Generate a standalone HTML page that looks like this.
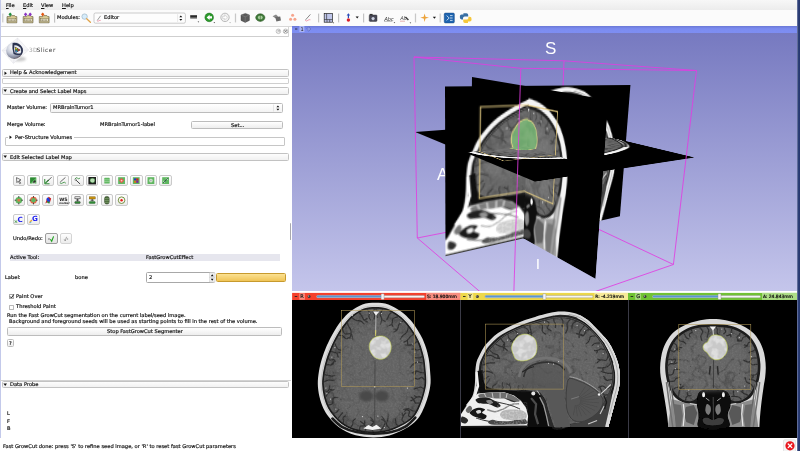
<!DOCTYPE html>
<html><head><meta charset="utf-8"><title>3D Slicer</title><style>
html,body{margin:0;padding:0;background:#fff;}
#root{position:relative;width:800px;height:451px;overflow:hidden;background:#fff;font-family:"DejaVu Sans","Liberation Sans",sans-serif;font-size:5.15px;color:#222;}
.a{position:absolute;}
.t{position:absolute;will-change:transform;white-space:nowrap;line-height:7px;height:7px;color:#141414;-webkit-text-stroke:0.18px #141414;}
.cb{position:absolute;left:2px;width:287px;height:8px;border:0.6px solid #c2c2c2;border-radius:1.5px;background:linear-gradient(#fdfdfd,#f1f1f1);box-sizing:border-box;}
.btn{position:absolute;border:0.6px solid #bcbcbc;border-radius:1.5px;background:linear-gradient(#ffffff,#ededed);box-sizing:border-box;}
.tb{position:absolute;width:12.6px;height:11.8px;border:0.6px solid #cacaca;border-radius:2px;background:linear-gradient(#fefefe,#ececec);box-sizing:border-box;}
svg{position:absolute;overflow:hidden;}
</style></head><body><div id="root">
<div class="a" style="left:0px;top:0px;width:800px;height:10px;background:linear-gradient(#f7f7f7,#ececec);"></div>
<span class="t" style="left:6px;top:1.70px;"><u>F</u>ile</span>
<span class="t" style="left:22.5px;top:1.70px;"><u>E</u>dit</span>
<span class="t" style="left:41px;top:1.70px;"><u>V</u>iew</span>
<span class="t" style="left:61.5px;top:1.70px;"><u>H</u>elp</span>
<div class="a" style="left:0px;top:10px;width:800px;height:16px;background:#fbfbfb;"></div>
<div class="a" style="left:0px;top:26px;width:292px;height:0.7px;background:#d8d8d8;"></div>
<svg style="left:0;top:10px;will-change:transform" width="480" height="16" viewBox="0 10 480 16"><path d="M2.8 13.6 V22.4" stroke="#9a9a9a" stroke-width="0.6"/><path d="M3.7 13.6 V22.4" stroke="#e4e4e4" stroke-width="0.5"/><path d="M7 16.6 h3.4 l1 -1 h3.2 l0.8 1 h1.4 v6.2 h-9.8z" fill="#d9cb93" stroke="#4f472a" stroke-width="0.55"/><rect x="7.9" y="18.6" width="8" height="3" fill="#f1ead0" stroke="#4f472a" stroke-width="0.35"/><path d="M8.8 19.4 v1.5 M10.2 19.4 v1.5 M11.6 19.4 v1.5 M13 19.4 v1.5 M14.4 19.4 v1.5" stroke="#4f472a" stroke-width="0.55"/><path d="M10.2 12.6 l1.7 1.7 l-1.7 2.3 l-1.7 -2.3z" fill="#1d8b3c"/><path d="M23.2 16.6 h3.4 l1 -1 h3.2 l0.8 1 h1.4 v6.2 h-9.8z" fill="#d9cb93" stroke="#4f472a" stroke-width="0.55"/><rect x="24.099999999999998" y="18.6" width="8" height="3" fill="#f1ead0" stroke="#4f472a" stroke-width="0.35"/><path d="M25.0 19.4 v1.5 M26.4 19.4 v1.5 M27.799999999999997 19.4 v1.5 M29.2 19.4 v1.5 M30.6 19.4 v1.5" stroke="#4f472a" stroke-width="0.55"/><path d="M25.599999999999998 12.6 l1.7 1.7 l-1.7 2.3 l-1.7 -2.3z" fill="#8b36c2"/><path d="M30.2 12.6 l1.7 1.7 l-1.7 2.3 l-1.7 -2.3z" fill="#8b36c2"/><path d="M39.3 16.6 h3.4 l1 -1 h3.2 l0.8 1 h1.4 v6.2 h-9.8z" fill="#d9cb93" stroke="#4f472a" stroke-width="0.55"/><rect x="40.199999999999996" y="18.6" width="8" height="3" fill="#f1ead0" stroke="#4f472a" stroke-width="0.35"/><path d="M41.099999999999994 19.4 v1.5 M42.5 19.4 v1.5 M43.9 19.4 v1.5 M45.3 19.4 v1.5 M46.699999999999996 19.4 v1.5" stroke="#4f472a" stroke-width="0.55"/><path d="M42.699999999999996 12.6 l1.7 1.7 l-1.7 2.3 l-1.7 -2.3z" fill="#e2560f"/><path d="M54.6 13.4 V22.6" stroke="#8e8e8e" stroke-width="0.6"/><path d="M55.4 13.4 V22.6" stroke="#e8e8e8" stroke-width="0.5"/><circle cx="84.6" cy="16.6" r="2.7" fill="#d6ecfa" stroke="#9bb4c6" stroke-width="0.7"/><path d="M86.7 18.8 L90.4 22.2" stroke="#e0a248" stroke-width="1.3" stroke-linecap="round"/><rect x="94" y="13" width="91.4" height="10.2" rx="1.5" fill="#fdfdfd" stroke="#ababab" stroke-width="0.6"/><path d="M177.6 14.2 V22" stroke="#d4d4d4" stroke-width="0.5"/><path d="M179.3 17.3 L180.8 15.4 L182.3 17.3Z M179.3 18.9 L180.8 20.8 L182.3 18.9Z" fill="#111"/><path d="M97.3 20.4 L100.6 15.8" stroke="#555" stroke-width="0.6"/><path d="M97 20.8 q1 0.9 2 0 t1.8 -0.4" stroke="#e05070" stroke-width="0.5" fill="none"/><rect x="190.2" y="15.2" width="6.8" height="2.6" fill="#2b2b2b"/><rect x="190.2" y="17.8" width="6.8" height="1" fill="#8a8a8a"/><path d="M197.6 21.6 h1.6 l-0.8 1z" fill="#222"/><circle cx="209.2" cy="17.4" r="4.3" fill="#2c9a2c" stroke="#1a6a1a" stroke-width="0.5"/><path d="M206.6 17.4 L209.6 14.7 V16.3 H212 V18.5 H209.6 V20.1Z" fill="#fff"/><path d="M213.5 22.2 h1.6 l-0.8 1z" fill="#222"/><circle cx="225" cy="17.4" r="4.2" fill="#f0f0f0" stroke="#a4a4a4" stroke-width="0.7"/><path d="M227.4 17.4 L224.6 14.9 V16.4 H222.6 V18.4 H224.6 V19.9Z" fill="#fff" stroke="#b0b0b0" stroke-width="0.4"/><path d="M229.3 22.2 h1.6 l-0.8 1z" fill="#999"/><path d="M235.4 13.6 V22.4" stroke="#8e8e8e" stroke-width="0.6"/><path d="M236.2 13.6 V22.4" stroke="#e8e8e8" stroke-width="0.5"/><path d="M241 15 L245.4 13.4 L249.4 15 L249.4 20.4 L245.2 22.4 L241 20.4Z" fill="#5c5c5c" stroke="#333" stroke-width="0.4"/><path d="M241 15 L245.2 16.8 L249.4 15 M245.2 16.8 V22.4" stroke="#8c8c8c" stroke-width="0.45" fill="none"/><ellipse cx="260.3" cy="17.6" rx="4.6" ry="3.8" fill="#3f7a3a" stroke="#28501f" stroke-width="0.5"/><ellipse cx="260.3" cy="17.6" rx="2.4" ry="2" fill="#a9cf9e"/><path d="M260.3 14 V21.2" stroke="#28501f" stroke-width="0.5"/><path d="M272.6 16.2 L276 14.4 L278.2 16.6 L275.4 18.2Z" fill="#8a8a8a"/><path d="M275.2 17 L280.2 16.4 L281 20.6 L276.4 21.6Z" fill="#6a6a6a"/><circle cx="292.6" cy="15.2" r="1.5" fill="#f6a48c"/><circle cx="290.6" cy="19.2" r="1.5" fill="#f6a48c"/><circle cx="294.9" cy="19.2" r="1.5" fill="#f6a48c"/><path d="M305.6 19.8 L310.4 14.4" stroke="#555" stroke-width="0.7"/><path d="M305.2 20.4 q1.3 1.2 2.6 0 t2.6 -0.6" stroke="#e8506e" stroke-width="0.55" fill="none"/><path d="M318.6 13.6 V22.4" stroke="#8e8e8e" stroke-width="0.6"/><path d="M319.4 13.6 V22.4" stroke="#e8e8e8" stroke-width="0.5"/><rect x="324.2" y="13.6" width="8.2" height="8.6" fill="#bfc6ea" stroke="#222" stroke-width="0.7"/><path d="M324.2 19.6 H332.4 M327 19.6 V22.2 M329.7 19.6 V22.2 M326.6 13.6 V19.6" stroke="#222" stroke-width="0.6"/><path d="M332.6 22.6 h1.6 l-0.8 1z" fill="#222"/><path d="M338.6 13.6 V22.4" stroke="#8e8e8e" stroke-width="0.6"/><path d="M339.4 13.6 V22.4" stroke="#e8e8e8" stroke-width="0.5"/><path d="M348.4 13.2 L350.2 15.6 H349 V18 H347.8 V15.6 H346.6Z" fill="#2a4ab8"/><circle cx="348.4" cy="20" r="1.7" fill="#d81e2a"/><path d="M355.6 16.4 h3.2 l-1.6 2z" fill="#111"/><path d="M363.6 13.6 V22.4" stroke="#8e8e8e" stroke-width="0.6"/><path d="M364.4 13.6 V22.4" stroke="#e8e8e8" stroke-width="0.5"/><rect x="369.2" y="15" width="7.8" height="6.4" rx="0.8" fill="#4a4a5a" stroke="#222" stroke-width="0.4"/><circle cx="373.1" cy="18.6" r="1.9" fill="#cfd4e6" stroke="#222" stroke-width="0.4"/><rect x="369.6" y="13.9" width="3" height="1.3" fill="#333"/><text x="384.2" y="20.6" font-size="5.4" fill="#444" font-family="DejaVu Sans,Liberation Sans,sans-serif" font-style="italic" letter-spacing="-0.3">Abc</text><path d="M384 21.4 h8.4" stroke="#666" stroke-width="0.4"/><path d="M393.6 22.2 h1.6 l-0.8 1z" fill="#222"/><text x="400.2" y="20.4" font-size="5.2" fill="#555" font-family="DejaVu Sans,Liberation Sans,sans-serif" font-style="italic" letter-spacing="-0.3">Ab</text><path d="M400 21.2 h5" stroke="#c04040" stroke-width="0.4"/><path d="M405.4 17 l3 3" stroke="#444" stroke-width="1.5"/><path d="M409.6 22.4 h1.6 l-0.8 1z" fill="#222"/><path d="M415.4 13.6 V22.4" stroke="#8e8e8e" stroke-width="0.6"/><path d="M416.2 13.6 V22.4" stroke="#e8e8e8" stroke-width="0.5"/><path d="M424.6 13.4 L425.5 16.8 L429 17.7 L425.5 18.6 L424.6 22 L423.7 18.6 L420.2 17.7 L423.7 16.8Z" fill="#eda33a"/><path d="M432.8 16.8 h3.2 l-1.6 2z" fill="#111"/><path d="M440.2 13.6 V22.4" stroke="#8e8e8e" stroke-width="0.6"/><path d="M441 13.6 V22.4" stroke="#e8e8e8" stroke-width="0.5"/><rect x="444.2" y="13" width="10.2" height="10" rx="1.2" fill="#1f64ae" stroke="#123e78" stroke-width="0.4"/><path d="M446.6 15.6 l2.6 2.4 l-2.6 2.4 M450 15.6 h2.6 M450 18 h2.6 M450 20.4 h2.6" stroke="#e6f0fa" stroke-width="0.8" fill="none"/><path d="M463.4 13.2 h3 q1.8 0 1.8 1.8 v1.6 h-3.4 q-1.8 0 -1.8 1.6 v1.2 h-1.4 q-1.8 0 -1.8 -2.4 q0 -2.4 1.8 -2.4 h1.8z" fill="#386fa4"/><path d="M468 23 h-3 q-1.8 0 -1.8 -1.8 v-1.6 h3.4 q1.8 0 1.8 -1.6 v-1.2 h1.4 q1.8 0 1.8 2.4 q0 2.4 -1.8 2.4 h-1.8z" fill="#f5c73c"/></svg>
<span class="t" style="left:56.6px;top:14.30px;">Modules:</span>
<span class="t" style="left:104.4px;top:14.30px;">Editor</span>
<div class="a" style="left:0px;top:36.0px;width:289px;height:0.8px;background:#cfcfcf;"></div>
<div class="a" style="left:288.4px;top:26.5px;width:0.7px;height:10px;background:#d6d6d6;"></div>
<div class="a" style="left:0px;top:0px;width:1.2px;height:438px;background:#c3c9ea;"></div>
<svg style="left:274px;top:27px" width="16" height="9" viewBox="0 0 16 9"><circle cx="4.4" cy="4.3" r="2.3" fill="#f2f2f2" stroke="#9a9a9a" stroke-width="0.5"/><path d="M3.3 5.4 L5.5 3.2 M3.4 3.3 h2 v2" stroke="#8a8a8a" stroke-width="0.45" fill="none"/><circle cx="11.6" cy="4.3" r="2.3" fill="#f2f2f2" stroke="#8a8a8a" stroke-width="0.5"/><path d="M10.3 3 L12.9 5.6 M12.9 3 L10.3 5.6" stroke="#666" stroke-width="0.7"/></svg>
<svg style="left:0px;top:36.6px;will-change:transform" width="64" height="27" viewBox="0 36.6 64 27">
<defs><radialGradient id="lg1" cx="0.38" cy="0.3" r="0.75"><stop offset="0" stop-color="#ffffff"/><stop offset="0.5" stop-color="#c5cad8"/><stop offset="0.85" stop-color="#7d8296"/><stop offset="1" stop-color="#5c4e52"/></radialGradient>
<filter id="lgb" x="-20%" y="-20%" width="140%" height="140%"><feGaussianBlur stdDeviation="0.4"/></filter>
<filter id="lgs" x="-30%" y="-30%" width="160%" height="160%"><feGaussianBlur stdDeviation="1.2"/></filter></defs>
<ellipse cx="19" cy="58.6" rx="7" ry="2.6" fill="#999" opacity="0.5" filter="url(#lgs)"/>
<g filter="url(#lgb)">
<path d="M2 50 L17.6 37.6 L28.6 49.6 L13.4 63 Z" fill="#f4f4f7" stroke="#d8d8de" stroke-width="0.4" opacity="0.9"/>
<path d="M2 50 L28.6 49.6 M17.6 37.6 L13.4 63" stroke="#dcdce2" stroke-width="0.4"/>
<circle cx="14.4" cy="50.2" r="8.3" fill="url(#lg1)"/>
<path d="M12.6 42.6 Q19 41.6 22.6 47.6 Q23.6 51.6 21.6 54 Q17 55.6 13.6 53.6 Q11.6 48 12.6 42.6Z" fill="#2a3350"/>
<path d="M14.2 45 Q18.6 44.6 21 48.6 Q21.6 51.6 20.4 53 Q17 53.6 14.8 52.4 Q13.6 48.6 14.2 45Z" fill="#e9edf2"/>
<path d="M14.6 46 L20.6 49.6 L15.6 52.6 Z" fill="#20243a"/>
<path d="M15.2 46.8 L17.4 48 L15.6 49.6 Z" fill="#f0cf2a"/>
<path d="M17.4 48 L19.8 49.6 L17.6 50.8 Z" fill="#e0402a"/>
<path d="M15.6 49.6 L17.6 50.8 L15.8 52 Z" fill="#3a8ee0"/>
<path d="M15.6 49.6 L17.4 48 L17.6 50.8 Z" fill="#3fae48"/>
</g>
<text x="29" y="52" font-size="5.9" fill="#a8a8a8" font-family="DejaVu Sans,Liberation Sans,sans-serif" letter-spacing="0.35">3D</text>
<text x="36.6" y="52" font-size="5.9" fill="#383838" font-family="DejaVu Sans,Liberation Sans,sans-serif" letter-spacing="0.5">Slicer</text>
</svg>
<div class="cb" style="top:68.6px;height:8.4px"></div>
<svg style="left:3.8px;top:70.50px" width="4" height="5" viewBox="0 0 4 5"><path d="M0.5 0.4 V4 L2.9 2.2 Z" fill="#111"/></svg>
<span class="t" style="left:10.3px;top:69.30px;">Help &amp; Acknowledgement</span>
<div class="a" style="left:2px;top:78.2px;width:287px;height:5.4px;border:0.6px solid #cfcfcf;box-sizing:border-box;border-radius:1px;"></div>
<div class="cb" style="top:86.8px;height:8.4px"></div>
<svg style="left:3.4px;top:89.10px" width="5" height="4" viewBox="0 0 5 4"><path d="M0.4 0.6 H4 L2.2 3 Z" fill="#111"/></svg>
<span class="t" style="left:10.3px;top:87.50px;">Create and Select Label Maps</span>
<span class="t" style="left:7.3px;top:104.40px;">Master Volume:</span>
<div class="btn" style="left:50.3px;top:103px;width:232.3px;height:10px;background:linear-gradient(#fff,#f3f3f3)"></div>
<span class="t" style="left:53px;top:104.40px;">MRBrainTumor1</span>
<svg style="left:273px;top:103px" width="10" height="10" viewBox="0 0 10 10"><path d="M0.5 1.5 V8.5" stroke="#d0d0d0" stroke-width="0.5"/><path d="M3.4 4.3 L4.9 2.5 L6.4 4.3 Z M3.4 5.7 L4.9 7.5 L6.4 5.7 Z" fill="#111"/></svg>
<span class="t" style="left:7.3px;top:121.40px;">Merge Volume:</span>
<span class="t" style="left:99.8px;top:121.40px;">MRBrainTumor1-label</span>
<div class="btn" style="left:191.2px;top:120.6px;width:91.4px;height:8.9px"></div>
<span class="t" style="left:230.6px;top:121.50px;">Set...</span>
<div class="a" style="left:5.4px;top:137.3px;width:279.4px;height:9px;border:0.6px solid #c6c6c6;box-sizing:border-box;border-radius:1px;"></div>
<div class="a" style="left:8px;top:135px;width:66px;height:5px;background:#fff;"></div>
<svg style="left:9.4px;top:135.2px" width="4" height="5" viewBox="0 0 4 5"><path d="M0.5 0.4 V4 L2.9 2.2 Z" fill="#111"/></svg>
<span class="t" style="left:15px;top:133.80px;">Per-Structure Volumes</span>
<div class="cb" style="top:152.9px;height:8.6px"></div>
<svg style="left:3.4px;top:155.30px" width="5" height="4" viewBox="0 0 5 4"><path d="M0.4 0.6 H4 L2.2 3 Z" fill="#111"/></svg>
<span class="t" style="left:10.3px;top:153.70px;">Edit Selected Label Map</span>
<div class="tb" style="left:12.50px;top:174.7px"></div><div class="tb" style="left:27.18px;top:174.7px"></div><div class="tb" style="left:41.86px;top:174.7px"></div><div class="tb" style="left:56.54px;top:174.7px"></div><div class="tb" style="left:71.22px;top:174.7px"></div><div class="tb" style="left:85.90px;top:174.7px"></div><div class="tb" style="left:100.58px;top:174.7px"></div><div class="tb" style="left:115.26px;top:174.7px"></div><div class="tb" style="left:129.94px;top:174.7px"></div><div class="tb" style="left:144.62px;top:174.7px"></div><div class="tb" style="left:159.30px;top:174.7px"></div><div class="tb" style="left:12.50px;top:194.3px"></div><div class="tb" style="left:27.18px;top:194.3px"></div><div class="tb" style="left:41.86px;top:194.3px"></div><div class="tb" style="left:56.54px;top:194.3px"></div><div class="tb" style="left:71.22px;top:194.3px"></div><div class="tb" style="left:85.90px;top:194.3px"></div><div class="tb" style="left:100.58px;top:194.3px"></div><div class="tb" style="left:115.26px;top:194.3px"></div><div class="tb" style="left:12.50px;top:213.5px"></div><div class="tb" style="left:27.18px;top:213.5px"></div>
<svg style="left:0;top:170px;will-change:transform" width="180" height="60" viewBox="0 170 180 60"><path d="M16.5 177.6 L21.0 180.0 L19.1 180.7 L20.7 183.2 L19.7 183.7 L18.2 181.2 L16.900000000000002 182.6Z" fill="#fff" stroke="#2a2a2a" stroke-width="0.65"/><rect x="30.179999999999996" y="177.6" width="6.2" height="6" fill="#5fb760"/><path d="M30.179999999999996 177.6 h6.2 l-6.2 6z" fill="#2f8a35"/><path d="M32.68 182.2 l2.2 -2.2 l1.2 1.2 l-2.2 2.2z" fill="#333"/><path d="M32.08 183.2 h3" stroke="#fff" stroke-width="0.6"/><path d="M44.76 179.0 V183.79999999999998 H49.559999999999995" stroke="#2f8a35" stroke-width="1" fill="none"/><path d="M45.16 183.4 L48.66 180.0" stroke="#2f8a35" stroke-width="1.1"/><path d="M47.559999999999995 181.2 L51.559999999999995 177.2" stroke="#333" stroke-width="0.8"/><path d="M60.239999999999995 182.0 L65.44 177.4" stroke="#444" stroke-width="0.8"/><path d="M59.839999999999996 182.79999999999998 q1.6 1.4 3 0 t3 0.4" stroke="#2f8a35" stroke-width="0.8" fill="none"/><path d="M74.92 179.2 q1.2 -2.6 2.6 -1 t2.6 -0.4" stroke="#2f8a35" stroke-width="0.8" fill="none"/><path d="M75.92 180.0 L80.11999999999999 184.0" stroke="#333" stroke-width="0.9"/><circle cx="75.72" cy="179.79999999999998" r="0.8" fill="#fff" stroke="#333" stroke-width="0.4"/><rect x="88.4" y="177.0" width="7.6" height="7.4" fill="#1e1e1e"/><path d="M90.0 180.2 q0 -2.2 2.4 -2 q2.8 0 2.4 2.4 q0 2.6 -2.6 2.2 q-2.4 -0.2 -2.2 -2.6z" fill="#b9dfb4" stroke="#2f8a35" stroke-width="0.4"/><rect x="104.28" y="177.79999999999998" width="5.4" height="5.8" rx="0.6" fill="#5fb760"/><path d="M104.28 179.79999999999998 h5.4 M104.28 181.6 h5.4" stroke="#dff0dc" stroke-width="0.4"/><rect x="118.15999999999998" y="177.2" width="6.8" height="6.8" fill="#5fb760"/><path d="M121.55999999999999 178.0 L124.15999999999998 180.6 L121.55999999999999 183.2 L118.96 180.6Z" fill="#e8564a"/><circle cx="121.55999999999999" cy="180.6" r="0.9" fill="#f6cfc8"/><rect x="132.84" y="177.2" width="6.8" height="6.8" fill="#5fb760"/><rect x="134.04000000000002" y="178.4" width="2.2" height="2.2" fill="#2438c8"/><rect x="136.24" y="178.4" width="2.2" height="2.2" fill="#d02020"/><rect x="134.04000000000002" y="180.6" width="2.2" height="2.2" fill="#d07a10"/><rect x="136.24" y="180.6" width="2.2" height="2.2" fill="#7a20a0"/><rect x="147.52" y="177.2" width="6.8" height="6.8" fill="#5fb760"/><circle cx="150.92000000000002" cy="180.6" r="1.9" fill="#d6ead2" stroke="#8fbf8a" stroke-width="0.5"/><circle cx="150.92000000000002" cy="180.6" r="0.6" fill="#9a7ab0"/><rect x="162.20000000000002" y="177.2" width="6.8" height="6.8" fill="#5fb760"/><path d="M163.40000000000003 182.79999999999998 L167.8 178.4" stroke="#234" stroke-width="0.9"/><path d="M163.20000000000002 181.0 l1.6 1.6 M166.40000000000003 178.6 l1.4 1.4" stroke="#fff" stroke-width="0.7"/><circle cx="18.8" cy="200.20000000000002" r="3.3" fill="#5fb760"/><rect x="17.5" y="198.9" width="2.6" height="2.6" fill="#d9784a"/><path d="M18.8 196.00000000000003 v1.6 M18.8 202.8 v1.6 M14.600000000000001 200.20000000000002 h1.6 M21.400000000000002 200.20000000000002 h1.6" stroke="#222" stroke-width="0.8"/><circle cx="33.48" cy="200.20000000000002" r="3.4" fill="#e8684a"/><circle cx="33.48" cy="200.20000000000002" r="2.2" fill="#5fb760"/><path d="M33.48 196.00000000000003 v1.6 M33.48 202.8 v1.6 M29.279999999999998 200.20000000000002 h1.6 M36.08 200.20000000000002 h1.6" stroke="#222" stroke-width="0.8"/><path d="M45.36 203.60000000000002 L46.76 199.20000000000002 L48.76 196.8 L49.559999999999995 200.8Z" fill="#c82020"/><path d="M48.76 196.8 L51.16 198.60000000000002 L49.76 203.00000000000003 L48.559999999999995 200.20000000000002Z" fill="#c82020"/><ellipse cx="48.36" cy="200.00000000000003" rx="1.5" ry="2.4" fill="#1c3ce0" transform="rotate(-25 48.16 200.20000000000002)"/><path d="M47.16 201.60000000000002 l2.4 1.6" stroke="#2f8a35" stroke-width="1.4"/><text x="59.13999999999999" y="200.50000000000003" font-size="4.6" font-weight="bold" fill="#222" font-family="DejaVu Sans,Liberation Sans,sans-serif">WS</text><text x="59.239999999999995" y="203.60000000000002" font-size="2.6" font-weight="bold" fill="#222" font-family="DejaVu Sans,Liberation Sans,sans-serif">marker</text><rect x="74.92" y="196.8" width="5.2" height="2" fill="#e8e8e8" stroke="#222" stroke-width="0.5"/><path d="M77.52 198.8 V201.4 M75.92 200.00000000000003 h3.2" stroke="#222" stroke-width="0.7"/><rect x="74.72" y="201.4" width="5.6" height="2.2" rx="1" fill="#2f8a35" stroke="#222" stroke-width="0.4"/><rect x="89.2" y="196.8" width="6" height="2.2" fill="#c89210" stroke="#6a4a00" stroke-width="0.4"/><path d="M92.2 199.00000000000003 V201.4 M90.60000000000001 200.20000000000002 h3.2" stroke="#222" stroke-width="0.7"/><rect x="89.2" y="201.4" width="6" height="2.2" rx="0.8" fill="#2f8a35" stroke="#1e5a22" stroke-width="0.4"/><rect x="104.58" y="196.4" width="4.6" height="7.6" rx="2" fill="#4a6a3a" stroke="#263a1c" stroke-width="0.5"/><path d="M104.67999999999999 198.60000000000002 h4.4 M104.67999999999999 200.60000000000002 h4.4 M104.67999999999999 202.4 h4.4" stroke="#9ab88a" stroke-width="0.5"/><circle cx="121.55999999999999" cy="200.20000000000002" r="3.3" fill="#f6f6ee" stroke="#5a7a1e" stroke-width="0.8"/><circle cx="121.55999999999999" cy="200.20000000000002" r="1.2" fill="#e81818"/><text x="17.5" y="222.0" font-size="7.2" font-weight="bold" fill="#1c1cf0" font-family="DejaVu Sans,Liberation Sans,sans-serif">C</text><path d="M14.8 222.8 l2.2 -2.4 M14.8 220.4 l2.2 2.4" stroke="#2f8a35" stroke-width="0.8"/><text x="31.979999999999997" y="221.4" font-size="7.2" font-weight="bold" fill="#1c1cf0" font-family="DejaVu Sans,Liberation Sans,sans-serif">G</text><path d="M29.479999999999997 222.6 l2.4 -2.6" stroke="#e8a83a" stroke-width="1.3"/><path d="M29.879999999999995 223.0 l1.6 -1" stroke="#58b8e8" stroke-width="1"/></svg>
<span class="t" style="left:12.6px;top:235.20px;">Undo/Redo:</span>
<div class="tb" style="left:45.2px;top:232.6px;border-color:#9c9c9c;background:linear-gradient(#f4f4f4,#e4e4e4)"></div>
<div class="tb" style="left:59.9px;top:232.6px;border-color:#d4d4d4"></div>
<svg style="left:45.2px;top:232.6px" width="28" height="12" viewBox="0 0 28 12"><path d="M3.4 6 h1.4 M3.4 6 l0.8 -0.8 M3.4 6 l0.8 0.8" stroke="#333" stroke-width="0.45" fill="none"/><path d="M5.4 6.3 L6.7 8.3 L8.6 3.4" stroke="#1ea01e" stroke-width="1.1" fill="none"/><path d="M19.2 6.3 L20.2 8 L21.6 3.8" stroke="#555" stroke-width="0.5" fill="none"/><path d="M22.2 6 l0.9 0 M23.1 6 l-0.6 -0.6 M23.1 6 l-0.6 0.6" stroke="#555" stroke-width="0.4" fill="none"/></svg>
<div class="a" style="left:9.6px;top:254.4px;width:270.6px;height:6.3px;background:#e6e6ee;"></div>
<span class="t" style="left:10.2px;top:254.00px;">Active Tool:</span>
<span class="t" style="left:145.8px;top:254.00px;">FastGrowCutEffect</span>
<span class="t" style="left:4.8px;top:274.20px;">Label:</span>
<span class="t" style="left:75px;top:274.20px;">bone</span>
<div class="btn" style="left:145.6px;top:272.3px;width:69.3px;height:10.8px;background:#fff;border-color:#a8a8a8"></div>
<span class="t" style="left:149px;top:274.20px;">2</span>
<svg style="left:208.6px;top:272.3px" width="7" height="11" viewBox="0 0 7 11"><rect x="0.3" y="0.6" width="5.8" height="9.6" rx="1" fill="#efefef" stroke="#b8b8b8" stroke-width="0.4"/><path d="M0.3 5.4 H6.1" stroke="#b8b8b8" stroke-width="0.4"/><path d="M1.8 4.2 L3.2 2.2 L4.6 4.2 Z M1.8 6.7 L3.2 8.7 L4.6 6.7 Z" fill="#111"/></svg>
<div class="a" style="left:216px;top:272.6px;width:69.6px;height:9.6px;border:0.6px solid #c79a2e;border-radius:1.5px;background:linear-gradient(#fbe192,#f0c456);box-sizing:border-box"></div>
<div class="a" style="left:8.6px;top:294px;width:5px;height:5px;border:0.5px solid #a9a9a9;background:#fff;box-sizing:border-box;border-radius:0.6px"></div>
<svg style="left:8.6px;top:293px" width="6" height="7" viewBox="0 0 6 7"><path d="M1.2 3.5 L2.4 5 L4.8 1.4" stroke="#111" stroke-width="0.9" fill="none"/></svg>
<span class="t" style="left:16px;top:293.00px;">Paint Over</span>
<div class="a" style="left:8.6px;top:304.6px;width:5px;height:5px;border:0.5px solid #b9b9b9;background:#fff;box-sizing:border-box;border-radius:0.6px"></div>
<span class="t" style="left:16px;top:303.40px;">Threshold Paint</span>
<span class="t" style="left:7.4px;top:312.10px;">Run the Fast GrowCut segmentation on the current label/seed image.</span>
<span class="t" style="left:9px;top:318.40px;">Background and foreground seeds will be used as starting points to fill in the rest of the volume.</span>
<div class="btn" style="left:7.4px;top:327.3px;width:275px;height:8.8px"></div>
<span class="t" style="left:106.6px;top:328.20px;">Stop FastGrowCut Segmenter</span>
<div class="btn" style="left:7.4px;top:338.6px;width:6.2px;height:8.8px"></div>
<span class="t" style="left:9.2px;top:339.50px;">?</span>
<div class="a" style="left:289.8px;top:223px;width:1.6px;height:17px;background:#a9a9ae;border-radius:0.8px;"></div>
<div class="a" style="left:0px;top:379.6px;width:291px;height:0.6px;background:#d2d2d2;"></div>
<div class="cb" style="top:380.9px;height:7.6px"></div>
<svg style="left:3.4px;top:382.80px" width="5" height="4" viewBox="0 0 5 4"><path d="M0.4 0.6 H4 L2.2 3 Z" fill="#111"/></svg>
<span class="t" style="left:10.3px;top:381.20px;">Data Probe</span>
<span class="t" style="left:7.4px;top:409.60px;">L</span>
<span class="t" style="left:7.4px;top:418.00px;">F</span>
<span class="t" style="left:7.4px;top:424.80px;">B</span>
<div class="a" style="left:292px;top:26px;width:505.3px;height:264.75px;overflow:hidden;background:linear-gradient(#7679c0 0px,#7679c0 6px,#c4c5eb 264px)"><div class="a" style="left:-292px;top:-26px;width:800px;height:451px"><svg style="left:0;top:0;will-change:transform" width="800" height="300" viewBox="0 0 800 300"><path d="M417.3 238 L558.4 210.3" stroke="#e23ce2" stroke-width="0.85" fill="none"/><path d="M673.4 264.5 L558.4 210.3" stroke="#e23ce2" stroke-width="0.85" fill="none"/><path d="M564 60.8 L558.4 210.3" stroke="#e23ce2" stroke-width="0.85" fill="none"/><text x="437" y="180.3" font-size="16.8" fill="#fff" font-family="Liberation Sans,Arial,sans-serif">A</text></svg>
<div class="a" style="left:0;top:0;width:180.67px;height:135.21px;transform-origin:0 0;transform:matrix3d(-0.33982511,-0.06558253,0,-0.0018739185,1.6999478,0.090652336,0,0.0013289083,0,0,1,0,415.2,131.9,0,1);--tf:#6e9b6a;--tw:0.8px;--so:0.55;--rc:#cbb574;--rw:0.85px;--to:0;--tg:1;--ts:#cfc27a;filter:brightness(1.13);"><svg style="left:0;top:0" width="180.67" height="135.21" viewBox="285.0 299.95 180.67 135.21"><use href="#axial"/></svg></div>
<div class="a" style="left:0;top:0;width:177.20px;height:116.30px;transform-origin:0 0;transform:matrix3d(-0.21848635,-0.032767523,0,-0.0016256436,0.22672301,1.2422467,0,0.00051316261,0,0,1,0,472,77,0,1);clip-path:polygon(0.00px 0.00px,89.40px 0.00px,89.40px 116.30px,0.00px 116.30px);--tf:#6e9b6a;--tw:0.8px;--so:0.55;--rc:#cbb574;--rw:0.85px;--to:0;--tg:1;--ts:#cfc27a;filter:brightness(1.13);"><svg style="left:0;top:0" width="177.20" height="116.30" viewBox="625.4 310.6 177.20 116.30"><use href="#cor"/></svg></div>
<div class="a" style="left:0;top:0;width:172.32px;height:116.57px;transform-origin:0 0;transform:matrix3d(2.2409868,0.14749939,0,0.0018445229,0.31793443,1.6306509,0,0.00070402954,0,0,1,0,445,86.6,0,1);--tf:#6e9b6a;--tw:0.8px;--so:0.55;--rc:#cbb574;--rw:0.85px;--to:0;--tg:1;--ts:#cfc27a;filter:brightness(1.13);"><svg style="left:0;top:0" width="172.32" height="116.57" viewBox="459.3 310.02 172.32 116.57"><use href="#sag"/></svg></div>
<div class="a" style="left:0;top:0;width:180.67px;height:135.21px;transform-origin:0 0;transform:matrix3d(-0.33982511,-0.06558253,0,-0.0018739185,1.6999478,0.090652336,0,0.0013289083,0,0,1,0,415.2,131.9,0,1);clip-path:polygon(94.90px 50.05px,180.67px 50.05px,180.67px 135.21px,94.90px 135.21px);--tf:#6e9b6a;--tw:0.8px;--so:0.55;--rc:#cbb574;--rw:0.85px;--to:0;--tg:1;--ts:#cfc27a;filter:brightness(1.13);"><svg style="left:0;top:0" width="180.67" height="135.21" viewBox="285.0 299.95 180.67 135.21"><use href="#axial"/></svg></div>
<div class="a" style="left:0;top:0;width:177.20px;height:116.30px;transform-origin:0 0;transform:matrix3d(-0.21848635,-0.032767523,0,-0.0016256436,0.22672301,1.2422467,0,0.00051316261,0,0,1,0,472,77,0,1);clip-path:polygon(89.40px 0.00px,177.20px 0.00px,177.20px 116.30px,89.40px 116.30px);--tf:#6e9b6a;--tw:0.8px;--so:0.55;--rc:#cbb574;--rw:0.85px;--to:0;--tg:1;--ts:#cfc27a;filter:brightness(1.13);"><svg style="left:0;top:0" width="177.20" height="116.30" viewBox="625.4 310.6 177.20 116.30"><use href="#cor"/></svg></div>
<div class="a" style="left:0;top:0;width:180.67px;height:135.21px;transform-origin:0 0;transform:matrix3d(-0.33982511,-0.06558253,0,-0.0018739185,1.6999478,0.090652336,0,0.0013289083,0,0,1,0,415.2,131.9,0,1);clip-path:polygon(94.90px 0.00px,180.67px 0.00px,180.67px 50.05px,94.90px 50.05px);--tf:#6e9b6a;--tw:0.8px;--so:0.55;--rc:#cbb574;--rw:0.85px;--to:0;--tg:1;--ts:#cfc27a;filter:brightness(1.13);"><svg style="left:0;top:0" width="180.67" height="135.21" viewBox="285.0 299.95 180.67 135.21"><use href="#axial"/></svg></div>
<svg style="left:0;top:0;will-change:transform" width="800" height="300" viewBox="0 0 800 300"><path d="M414 57 L520.8 68.3" stroke="#e23ce2" stroke-width="0.85" fill="none"/><path d="M520.8 68.3 L696.5 70.5" stroke="#e23ce2" stroke-width="0.85" fill="none"/><path d="M414 57 L564 60.8" stroke="#e23ce2" stroke-width="0.85" fill="none"/><path d="M564 60.8 L696.5 70.5" stroke="#e23ce2" stroke-width="0.85" fill="none"/><path d="M414 57 L417.3 238" stroke="#e23ce2" stroke-width="0.85" fill="none"/><path d="M696.5 70.5 L673.4 264.5" stroke="#e23ce2" stroke-width="0.85" fill="none"/><path d="M520.8 68.3 L513 320" stroke="#e23ce2" stroke-width="0.85" fill="none"/><path d="M417.3 238 L513 320" stroke="#e23ce2" stroke-width="0.85" fill="none"/><path d="M673.4 264.5 L513 320" stroke="#e23ce2" stroke-width="0.85" fill="none"/><text x="545" y="53.6" font-size="17" fill="#fff" font-family="Liberation Sans,Arial,sans-serif">S</text><text x="535.8" y="269.2" font-size="15.5" fill="#fff" font-family="Liberation Sans,Arial,sans-serif">I</text></svg>
</div><div class="a" style="left:0;top:0;width:505.3px;height:6.6px;background:linear-gradient(#6a78d6,#7c8cf0 40%,#7e8ef2)"></div><svg style="left:1px;top:0.4px;will-change:transform" width="24" height="6" viewBox="0 0 24 6"><path d="M2 3 h2.4" stroke="#223" stroke-width="0.9"/><rect x="6.4" y="0" width="5" height="6" fill="#aab4f4"/><text x="7.5" y="5" font-size="5" fill="#222" font-family="DejaVu Sans,Liberation Sans,sans-serif">1</text><path d="M15.8 0.8 L18 3 L15.8 5.2 L13.6 3Z" fill="#8d99e6" stroke="#4a569c" stroke-width="0.4"/></svg></div>
<svg width="0" height="0" style="position:absolute;left:0;top:0"><defs>
<filter id="b03" x="-10%" y="-10%" width="120%" height="120%"><feGaussianBlur stdDeviation="0.35"/></filter>
<filter id="b06" x="-10%" y="-10%" width="120%" height="120%"><feGaussianBlur stdDeviation="0.6"/></filter>
<filter id="b1" x="-10%" y="-10%" width="120%" height="120%"><feGaussianBlur stdDeviation="1"/></filter>
<filter id="b2" x="-20%" y="-20%" width="140%" height="140%"><feGaussianBlur stdDeviation="2"/></filter>
<filter id="sulci" x="0" y="0" width="100%" height="100%" color-interpolation-filters="sRGB">
 <feTurbulence type="turbulence" baseFrequency="0.075" numOctaves="2" seed="7" result="t"/>
 <feColorMatrix type="matrix" values="0 0 0 0 0  0 0 0 0 0  0 0 0 0 0  -5.5 0 0 0 1.0" result="a"/>
 <feGaussianBlur stdDeviation="0.55" result="m"/>
 <feComposite in="SourceGraphic" in2="m" operator="in"/>
</filter>
<filter id="grain" x="0" y="0" width="100%" height="100%" color-interpolation-filters="sRGB">
 <feTurbulence type="fractalNoise" baseFrequency="0.55" numOctaves="2" seed="3"/>
 <feColorMatrix type="matrix" values="0 0 0 0 1  0 0 0 0 1  0 0 0 0 1  1.6 0 0 0 -0.62"/>
 <feComposite in2="SourceGraphic" operator="in"/>
</filter>
<filter id="blot" x="0" y="0" width="100%" height="100%" color-interpolation-filters="sRGB">
 <feTurbulence type="fractalNoise" baseFrequency="0.16" numOctaves="2" seed="11"/>
 <feColorMatrix type="matrix" values="0 0 0 0 0  0 0 0 0 0  0 0 0 0 0  4 0 0 0 -1.7"/>
 <feGaussianBlur stdDeviation="0.5" result="m"/>
 <feComposite in="SourceGraphic" in2="m" operator="in"/>
</filter>
<g id="axial"><rect x="270" y="296" width="215" height="146" fill="#000"/><g filter="url(#b03)"><path d="M375 302.6C379.3 302.6 383.7 302.8 388 304.3C392.3 305.8 397.3 309 401 311.6C404.7 314.2 407.3 317 410 320C412.7 323 415 326.6 417 329.7C419 332.8 420.6 335.5 422 338.5C423.4 341.5 424.4 344.2 425.5 347.5C426.6 350.8 427.6 354.8 428.3 358.5C429 362.2 429.3 365.9 429.6 370C429.9 374.1 430.5 378.8 430.2 383C429.9 387.2 429 391.2 428 395C427 398.8 425.8 402.3 424.3 406C422.8 409.7 420.9 414 418.8 417C416.8 420 414.6 421.9 412 424C409.4 426.1 406.8 427.7 403 429.6C399.2 431.5 393.9 434.1 389 435.4C384.1 436.7 378.2 437.3 373.5 437.4C368.8 437.5 364.3 436.8 360.5 436.2C356.7 435.6 353.6 434.7 350.5 433.6C347.4 432.5 344.6 431.1 342 429.5C339.4 427.9 337 426.2 334.7 424C332.4 421.8 330 419.2 328 416.5C326 413.8 324.3 411.3 322.8 408C321.3 404.7 319.9 400.5 319 396.5C318.1 392.5 317.5 388.2 317.4 384C317.3 379.8 317.9 375.2 318.6 371C319.3 366.8 320.4 362.4 321.6 358.5C322.8 354.6 324.2 350.8 325.6 347.5C327 344.2 328.3 341.5 329.8 338.5C331.3 335.5 332.8 332.8 334.7 329.7C336.6 326.6 339 323 341.5 320C344 317 346.2 314.2 349.6 311.6C353 309 357.8 305.8 362 304.3C366.2 302.8 370.7 302.6 375 302.6Z" fill="#dedede"/><path d="M375 306.9C378.9 306.9 382.7 307 386.6 308.4C390.5 309.7 395.1 312.7 398.5 315.1C401.9 317.5 404.3 320 406.8 322.8C409.3 325.7 411.5 329.1 413.4 332C415.3 335 416.8 337.6 418.1 340.4C419.5 343.1 420.4 345.6 421.4 348.8C422.4 351.9 423.4 355.7 424.1 359.3C424.7 362.9 425 366.4 425.3 370.3C425.6 374.2 426.2 378.8 425.9 382.7C425.7 386.7 424.8 390.3 423.8 393.9C422.9 397.5 421.8 400.9 420.3 404.3C418.9 407.8 417.1 411.9 415.2 414.6C413.4 417.3 411.7 418.8 409.3 420.6C407 422.5 404.7 424 401.1 425.7C397.5 427.5 392.5 430 387.9 431.2C383.3 432.5 377.8 433 373.4 433.1C368.9 433.2 364.8 432.5 361.2 432C357.6 431.4 354.8 430.6 352 429.6C349.1 428.5 346.6 427.3 344.2 425.8C341.8 424.4 339.8 422.8 337.6 420.8C335.5 418.9 333.3 416.4 331.5 413.9C329.6 411.5 328.1 409.3 326.7 406.2C325.3 403.2 324 399.3 323.2 395.6C322.4 391.8 321.8 387.9 321.7 383.9C321.6 380 322.2 375.7 322.8 371.7C323.5 367.7 324.6 363.5 325.7 359.7C326.8 356 328.3 352.3 329.6 349.1C330.9 345.9 332.2 343.3 333.6 340.5C335.1 337.6 336.5 335 338.3 332C340.2 329 342.5 325.6 344.8 322.7C347.1 319.9 349.1 317.4 352.2 315C355.3 312.6 359.6 309.7 363.4 308.4C367.2 307 371.1 306.9 375 306.9Z" fill="#1d1d1d"/><path d="M375 308.6C378.7 308.6 382.3 308.7 386 310C389.8 311.3 394.3 314.1 397.5 316.5C400.8 318.8 403.1 321.2 405.5 324C407.9 326.7 410.1 330.1 412 333C413.8 335.8 415.3 338.4 416.6 341.1C417.9 343.8 418.8 346.2 419.8 349.3C420.7 352.4 421.8 356 422.4 359.6C423 363.1 423.3 366.6 423.6 370.5C423.9 374.3 424.5 378.8 424.2 382.6C424 386.5 423.1 390 422.2 393.5C421.3 397 420.2 400.3 418.8 403.7C417.4 407 415.6 411 413.8 413.6C412.1 416.2 410.5 417.5 408.3 419.3C406 421.1 403.8 422.5 400.3 424.2C396.9 425.9 392 428.4 387.5 429.6C383 430.8 377.7 431.3 373.3 431.4C369 431.5 364.9 430.9 361.5 430.3C358 429.7 355.3 428.9 352.5 428C349.8 427 347.4 425.8 345.1 424.4C342.8 423 340.8 421.5 338.8 419.6C336.7 417.7 334.6 415.3 332.8 412.9C331.1 410.6 329.6 408.5 328.3 405.5C326.9 402.6 325.7 398.8 324.9 395.2C324 391.6 323.5 387.8 323.4 383.9C323.3 380 323.9 375.9 324.5 372C325.2 368 326.2 363.9 327.4 360.2C328.5 356.5 329.9 352.9 331.2 349.8C332.5 346.6 333.7 344 335.1 341.2C336.6 338.4 337.9 335.8 339.8 332.9C341.6 330 343.9 326.6 346.1 323.8C348.4 321.1 350.3 318.7 353.2 316.4C356.2 314.1 360.4 311.2 364 310C367.6 308.7 371.3 308.6 375 308.6Z" fill="#585858"/><path d="M375 305.9C379 305.9 382.9 306 386.9 307.4C390.9 308.8 395.6 311.8 399.1 314.3C402.5 316.7 405 319.3 407.5 322.2C410.1 325.1 412.3 328.5 414.2 331.5C416.1 334.5 417.7 337.1 419 339.9C420.4 342.8 421.3 345.3 422.4 348.5C423.4 351.7 424.4 355.5 425.1 359.1C425.7 362.7 426 366.3 426.3 370.3C426.6 374.2 427.2 378.8 426.9 382.8C426.7 386.8 425.7 390.5 424.8 394.2C423.9 397.8 422.7 401.2 421.3 404.7C419.8 408.2 418 412.4 416.1 415.1C414.2 417.9 412.4 419.5 409.9 421.4C407.5 423.3 405.2 424.8 401.5 426.6C397.9 428.4 392.8 431 388.2 432.2C383.5 433.5 377.9 434 373.4 434.1C368.9 434.2 364.7 433.5 361 432.9C357.4 432.3 354.5 431.5 351.6 430.5C348.7 429.5 346.2 428.2 343.7 426.7C341.3 425.2 339.1 423.6 336.9 421.6C334.8 419.6 332.5 417 330.6 414.5C328.8 412 327.2 409.8 325.8 406.6C324.4 403.5 323.1 399.6 322.2 395.8C321.4 392 320.8 388 320.7 383.9C320.6 379.9 321.2 375.6 321.9 371.5C322.5 367.5 323.6 363.2 324.8 359.4C325.9 355.6 327.3 352 328.7 348.8C330 345.5 331.3 342.9 332.7 340C334.2 337.1 335.6 334.4 337.5 331.5C339.4 328.5 341.7 325 344 322.1C346.4 319.2 348.4 316.7 351.6 314.2C354.8 311.8 359.2 308.8 363.1 307.4C367 306 371 305.9 375 305.9Z" fill="none" stroke="#b4b4b4" stroke-width="0.9" opacity="0.7" filter="url(#b06)"/><path d="M332 418.5C333.7 419.9 338 424.8 342 427C346 429.2 350.8 430.9 356 432C361.2 433.1 367.7 433.6 373.5 433.6C379.3 433.6 385.8 433.2 391 432C396.2 430.8 401 428.9 405 426.5C409 424.1 413.3 419 415 417.5" fill="none" stroke="#1d1d1d" stroke-width="2.6" stroke-linecap="round" filter="url(#b06)"/><path d="M375 317.6C377.7 317.6 380.2 317.4 383.1 318.5C386 319.5 389.7 321.9 392.3 323.8C394.9 325.7 396.7 327.6 398.8 329.9C400.8 332.3 402.8 335.4 404.4 337.9C406 340.4 407.3 342.6 408.5 345C409.6 347.3 410.3 349.3 411.2 352C412 354.7 413 358 413.5 361.2C414.1 364.4 414.4 367.7 414.6 371.2C414.9 374.6 415.4 378.7 415.2 382C415 385.4 414.3 388.2 413.5 391.3C412.7 394.3 411.6 397.3 410.5 400.2C409.3 403.1 407.7 406.5 406.4 408.5C405.1 410.5 404.3 411 402.6 412.3C401 413.5 399.3 414.7 396.3 416.2C393.4 417.6 389 419.9 385.2 420.9C381.3 421.9 376.8 422.3 373.1 422.4C369.4 422.5 365.9 421.9 362.9 421.4C360 420.9 357.8 420.3 355.6 419.5C353.4 418.7 351.6 417.8 349.8 416.7C348 415.6 346.5 414.5 344.9 413C343.3 411.5 341.4 409.4 340 407.5C338.6 405.7 337.5 404.2 336.5 401.8C335.4 399.5 334.3 396.2 333.6 393.2C333 390.2 332.4 387.1 332.4 383.8C332.4 380.5 332.8 376.9 333.4 373.4C334 369.9 335 366.2 336 362.8C337 359.4 338.3 356.1 339.5 353.2C340.7 350.3 341.8 347.9 343.2 345.3C344.5 342.7 345.7 340.4 347.4 337.7C349 335.1 351.2 331.9 353.1 329.5C355 327.2 356.4 325.4 358.7 323.5C361 321.7 364.3 319.4 367 318.4C369.7 317.5 372.3 317.6 375 317.6Z" fill="#636363" filter="url(#b2)"/></g><path d="M375 308.6C378.7 308.6 382.3 308.7 386 310C389.8 311.3 394.3 314.1 397.5 316.5C400.8 318.8 403.1 321.2 405.5 324C407.9 326.7 410.1 330.1 412 333C413.8 335.8 415.3 338.4 416.6 341.1C417.9 343.8 418.8 346.2 419.8 349.3C420.7 352.4 421.8 356 422.4 359.6C423 363.1 423.3 366.6 423.6 370.5C423.9 374.3 424.5 378.8 424.2 382.6C424 386.5 423.1 390 422.2 393.5C421.3 397 420.2 400.3 418.8 403.7C417.4 407 415.6 411 413.8 413.6C412.1 416.2 410.5 417.5 408.3 419.3C406 421.1 403.8 422.5 400.3 424.2C396.9 425.9 392 428.4 387.5 429.6C383 430.8 377.7 431.3 373.3 431.4C369 431.5 364.9 430.9 361.5 430.3C358 429.7 355.3 428.9 352.5 428C349.8 427 347.4 425.8 345.1 424.4C342.8 423 340.8 421.5 338.8 419.6C336.7 417.7 334.6 415.3 332.8 412.9C331.1 410.6 329.6 408.5 328.3 405.5C326.9 402.6 325.7 398.8 324.9 395.2C324 391.6 323.5 387.8 323.4 383.9C323.3 380 323.9 375.9 324.5 372C325.2 368 326.2 363.9 327.4 360.2C328.5 356.5 329.9 352.9 331.2 349.8C332.5 346.6 333.7 344 335.1 341.2C336.6 338.4 337.9 335.8 339.8 332.9C341.6 330 343.9 326.6 346.1 323.8C348.4 321.1 350.3 318.7 353.2 316.4C356.2 314.1 360.4 311.2 364 310C367.6 308.7 371.3 308.6 375 308.6Z" fill="#303030" filter="url(#sulci)" opacity="0.4"/><path d="M374.2 308.6C374 309.1 373 310.6 373 311.8C373.1 312.9 374.2 314.3 374.4 315.4C374.5 316.6 373.9 318.2 373.8 318.7M382.2 309.5C381.8 310.3 380 312.6 379.9 314.3C379.7 315.9 381.4 317.8 381.4 319.4C381.4 321.1 380.2 323.5 380 324.3M381.4 319.4L384.7 321.4M390.9 312.6C390.6 312.9 389.5 313.6 389 314.3C388.5 315 388.3 315.9 387.9 316.7C387.5 317.5 387 318.6 386.8 319M397.2 316.7C396.4 317 393.4 317.5 392.4 318.8C391.5 320 392.4 322.9 391.5 324.1C390.6 325.4 387.6 325.9 386.8 326.3M391.5 324.1L392.6 326.6M402.3 321.2C401.7 321.7 399.6 323.1 398.6 324.5C397.7 325.9 397.8 328.1 396.9 329.4C395.9 330.7 393.5 331.9 392.9 332.4M396.9 329.4L393.4 329.1M407.8 327.4C407.6 328.2 407.3 330.8 406.4 332.1C405.6 333.5 403.6 334.2 402.5 335.4C401.4 336.6 400.2 338.7 399.7 339.3M412.5 334.5C412 334.9 410.4 336.1 409.5 337C408.6 338 408.1 339.2 407.1 340.1C406.1 340.9 404.1 341.7 403.5 342M407.1 340.1L407.3 344.7M417.2 340.2C416.7 340.8 415.2 342.9 414 343.7C412.7 344.6 411.2 344.9 409.6 345.1C408.1 345.2 405.4 344.9 404.6 344.9M419.1 349.2C418.7 349.3 417.6 350.1 416.8 350C415.9 350 414.9 349.1 414.1 349C413.2 348.8 412 349.1 411.6 349.1M422 356C421.6 356.3 420.5 357.5 419.7 357.7C418.9 358 418 357.7 417.1 357.7C416.3 357.6 415 357.5 414.5 357.5M422.8 363.1C422 362.9 419.3 362 417.7 362.1C416.1 362.2 414.7 362.7 413.3 363.7C412 364.6 410.2 366.9 409.6 367.5M423.7 372.8C423.1 372.7 421.1 372.6 419.8 372.3C418.5 372 417.2 370.8 415.9 370.9C414.6 370.9 412.6 372.4 412 372.8M415.9 370.9L414.5 374.2M424.1 379.8C423.6 379.4 422.4 377.5 421.3 377.4C420.2 377.3 418.7 379 417.6 379.1C416.5 379.2 415 378.4 414.5 378.2M423.4 388.7C422.8 388.4 421.3 387.1 420.2 387C419.2 386.9 418 387.6 416.9 388C415.9 388.3 414.2 388.8 413.7 389M421.2 397.4C420.9 397.2 419.8 396.6 419 396.5C418.2 396.5 417.2 397.1 416.5 396.9C415.7 396.8 414.6 395.8 414.3 395.6M416.5 396.9L413.7 399M418.7 403.1C418.1 403 415.8 403.4 414.9 402.8C414 402.1 413.9 400.2 413.2 399.3C412.5 398.3 411.1 397.3 410.7 396.9M413.2 399.3L410.4 400.7M415.5 411.3C414.8 411.2 412.8 410.9 411.5 410.4C410.1 410 408.9 408.7 407.6 408.5C406.2 408.3 404.1 409.2 403.4 409.3M407.6 408.5L404.1 411.1M411 417.2C410.5 416.9 408.4 416.4 408.1 415.4C407.8 414.4 409.6 412.1 409.2 411.2C408.9 410.2 406.4 409.9 405.8 409.7M403.9 422.5C403.5 422 401.8 420.8 401.6 419.7C401.4 418.7 402.6 417.2 402.7 416.1C402.7 415 401.9 413.5 401.7 413M402.7 416.1L405.2 412.9M397.6 425.7C397.3 425.4 396.2 424.6 395.8 423.9C395.4 423.2 395.5 422.2 395.3 421.4C395.2 420.5 395.1 419.2 395.1 418.8M389.6 428.8C389 428 386.5 426 386.1 424.4C385.7 422.8 387.1 420.8 387.4 419.1C387.7 417.3 387.9 414.7 388 413.9M380.5 430.3C381 429.6 382.6 427.5 383.3 426.1C384 424.6 385.1 423.3 384.8 421.6C384.5 419.9 381.9 417 381.3 416.1M384.8 421.6L381.3 419.1M372.7 431.5C372.2 430.7 369.7 428.5 369.8 426.9C370 425.3 373.4 423.5 373.4 422C373.5 420.4 370.7 418.2 370.1 417.4M373.4 422L370.4 420.1M364.7 430.7C364.8 430.1 365.7 428.4 365.6 427.3C365.4 426.2 363.9 425.3 363.8 424.3C363.6 423.2 364.3 421.5 364.4 420.9M363.8 424.3L360.1 421.3M359.2 429.6C359.3 429.1 359.1 427.1 359.9 426.4C360.7 425.7 363.1 426.1 363.9 425.4C364.6 424.7 364.3 422.6 364.4 422M350.8 426.6C351.1 426.2 352.1 425.1 352.4 424.1C352.7 423.2 352.2 421.7 352.7 420.8C353.1 419.9 354.6 419 355 418.7M342.7 422.7C342.8 422.3 343.2 421.1 343.2 420.3C343.2 419.4 342.3 418.4 342.6 417.6C342.9 416.8 344.6 416 345 415.7M337.4 418.8C337.7 418.5 338.4 417.4 338.9 416.8C339.4 416.1 339.9 415.4 340.4 414.7C340.9 414.1 341.8 413.1 342 412.8M332.3 412.9C332.8 412.9 334.1 413.1 334.8 412.9C335.6 412.6 336.2 412.1 336.8 411.5C337.4 410.9 338.2 409.7 338.5 409.4M328 405C328.7 404.8 331.4 404.8 332.2 403.6C332.9 402.5 331.8 399.2 332.7 398.1C333.5 397.1 336.6 397.5 337.4 397.4M325.8 396.2C326.1 395.7 326.8 394 327.6 393.1C328.3 392.2 329.2 391.5 330.2 390.9C331.2 390.3 333 389.7 333.6 389.4M324.3 390.8C324.7 390.9 326.1 391.5 326.9 391.3C327.7 391.1 328.2 389.9 328.9 389.6C329.7 389.3 331 389.7 331.5 389.7M328.9 389.6L329.4 385.3M323.7 381.7C324.2 381.4 325.7 380.4 326.8 380.2C327.8 379.9 329 380.1 330.2 380.1C331.3 380.1 333.1 380.2 333.7 380.2M324.3 374.6C324.9 374.7 326.6 375 327.7 375.2C328.8 375.4 329.8 376 331 376C332.1 376 333.9 375.4 334.4 375.3M325.9 364.9C326.3 364.9 327.4 364.6 328.2 364.6C329 364.6 329.9 365.1 330.7 364.9C331.5 364.8 332.6 363.8 333 363.6M330.7 364.9L333.7 361.7M328.1 357.7C328.3 358.1 328.7 359.8 329.6 360.1C330.4 360.4 332.3 359.2 333.2 359.4C334.1 359.6 334.7 361.1 335 361.5M331.1 351.5C331.6 351.6 333 351.9 333.9 352.2C334.8 352.4 335.7 353 336.6 353C337.6 353 339.1 352.3 339.6 352.2M336.6 353L337.7 356.7M334.7 343.8C334.9 344.3 335.4 345.8 335.9 346.7C336.4 347.6 336.7 348.6 337.6 349.2C338.4 349.8 340.4 350 340.9 350.1M338 335.3C338.6 335.3 340.8 335.1 342.1 335.6C343.4 336.2 344.4 338.6 345.8 338.7C347.2 338.8 349.7 336.6 350.5 336.2M342 329.1C342.5 329.9 343.1 333 344.6 333.7C346 334.5 349.5 332.8 350.8 333.8C352.1 334.7 352.2 338.5 352.5 339.5M350.8 333.8L349.5 338.2M346.8 322.5C347.1 323.2 347.8 325.1 348.4 326.4C349 327.6 350 328.7 350.4 330C350.8 331.4 350.6 333.8 350.7 334.5M351.9 317.9C352.5 318.3 354.3 319.8 355.7 320.3C357.1 320.8 359.1 320.3 360.4 321C361.8 321.6 363.2 323.6 363.8 324.1M358.7 312.7C359.2 313.2 360.7 314.7 361.5 315.9C362.3 317.1 362.5 318.9 363.5 319.9C364.4 320.9 366.7 321.6 367.3 322M363.5 319.9L366.7 318.6M366.8 309.5C367.2 310 368.8 311.3 369.1 312.5C369.3 313.7 368.4 315.3 368.5 316.5C368.7 317.7 369.7 319.3 370 319.8M375.1 308.8C375.4 309.2 376.8 310.2 377 311.2C377.2 312.1 376.4 313.4 376.4 314.4C376.3 315.4 376.8 316.8 376.8 317.2" fill="none" stroke="#2b2b2b" stroke-width="1.25" stroke-linecap="round" filter="url(#b03)" style="opacity:var(--so,0.9)"/><path d="M374.9 321.6C374.9 321.8 375.2 322.6 375 322.9C374.8 323.3 374.2 323.4 373.9 323.7C373.6 324 373.1 324.4 372.9 324.6M373.9 323.7L375.6 326.1M386.5 325.1C386.6 325.3 387 326.2 386.9 326.8C386.9 327.3 386.8 327.8 386.4 328.3C386.1 328.7 385.1 329.3 384.8 329.5M393.1 331.4C392.8 331.4 391.4 331 390.9 331.4C390.3 331.8 390.3 333.3 389.8 333.8C389.3 334.4 388.2 334.5 387.9 334.7M401.5 340.3C401.2 340.6 400.5 341.5 400 342.1C399.6 342.7 399.5 343.7 398.9 344.1C398.2 344.5 396.6 344.2 396.1 344.3M398.9 344.1L395.4 344M405.9 348C405.6 348.2 404.8 348.8 404.3 348.7C403.8 348.7 403.3 347.9 402.8 347.9C402.2 347.9 401.5 348.6 401.2 348.7M409.4 359C409.2 359.1 408.8 359.3 408.5 359.6C408.3 359.9 408.3 360.4 408.1 360.7C407.8 360.9 407.3 361.1 407.2 361.2M410.7 370.5C410.5 370.6 409.7 371.2 409.2 371.2C408.7 371.2 408.2 370.4 407.7 370.3C407.1 370.3 406.4 370.9 406.1 371M411.3 380.4C411 380.5 410.1 381 409.5 381C409 381.1 408.4 381 407.8 380.7C407.3 380.4 406.4 379.5 406.1 379.2M409.2 393.1C408.8 393 407.8 392.4 407 392.6C406.2 392.7 405.4 393.8 404.6 393.8C403.8 393.9 402.8 393 402.4 392.8M404.7 403.4C404.6 403.3 404.1 402.8 403.8 402.7C403.4 402.5 403 402.7 402.6 402.7C402.2 402.6 401.7 402.5 401.5 402.5M402.6 402.7L399.3 404.8M399 410.1C398.9 409.8 398.7 409.1 398.4 408.8C398.1 408.5 397.4 408.6 397 408.4C396.6 408.1 396.2 407.6 396.1 407.4M389 415.3C388.9 415.1 388.2 414.5 388 413.9C387.8 413.3 388.1 412.5 388 412C387.8 411.4 387 410.8 386.8 410.6M388 412L383.8 410.4M377.2 418.1C377 417.8 376.2 417.2 376 416.7C375.8 416.1 376.1 415.3 376 414.7C375.9 414.1 375.6 413.3 375.6 413M376 414.7L373.2 413.9M367.4 417.8C367.5 417.7 367.8 417.1 367.8 416.8C367.8 416.4 367.4 416.1 367.3 415.7C367.1 415.3 367 414.8 367 414.6M356.2 415.1C356.4 415 357.2 414.9 357.5 414.5C357.8 414.2 357.9 413.5 358.1 413.1C358.3 412.7 358.8 412.2 359 412M358.1 413.1L357.3 408.8M346.9 408.1C347.1 408 347.7 407.9 348.1 407.8C348.5 407.6 348.9 407.5 349.2 407.3C349.6 407 349.9 406.4 350 406.2M349.2 407.3L349.8 404.5M339.8 399.2C340 399.3 340.7 399.7 341.1 399.6C341.5 399.6 341.8 398.8 342.2 398.7C342.6 398.6 343.3 398.9 343.5 399M337.2 390.8C337.4 390.7 338.3 390.4 338.9 390.3C339.4 390.1 340 389.7 340.6 389.8C341.2 389.9 342.1 390.7 342.4 390.9M336.9 378.8C337.2 378.9 337.8 379.1 338.3 379.2C338.8 379.4 339.2 379.5 339.7 379.7C340.1 379.8 340.8 379.9 341.1 380M339.2 369.1C339.4 369 340 368.5 340.4 368.4C340.9 368.4 341.3 368.9 341.8 368.9C342.2 368.8 342.8 368.3 343 368.1M342.4 356.9C342.6 356.9 343.1 356.9 343.5 357C343.8 357 344.2 356.9 344.5 357C344.8 357.1 345.3 357.7 345.5 357.8M346.6 348C346.9 347.9 347.9 347.2 348.5 347.2C349.1 347.2 349.7 347.9 350.3 348.1C350.9 348.3 351.8 348.5 352.1 348.6M350.3 348.1L352 345.7M351.4 338.2C351.7 338.2 352.9 338.1 353.2 338.5C353.6 338.9 353.3 340.1 353.7 340.5C354.1 340.9 355.2 340.8 355.5 340.9M357.9 328.2C357.8 328.5 357.5 329.6 357.7 330.2C357.8 330.8 358.1 331.3 358.6 331.7C359.1 332.1 360.3 332.6 360.7 332.8M358.6 331.7L361.4 332.4M368.8 323.3C369 323.4 369.3 323.9 369.6 324C369.9 324.2 370.5 324 370.9 324.1C371.2 324.3 371.6 324.7 371.7 324.8M370.9 324.1L374.8 323.1" fill="none" stroke="#3a3a3a" stroke-width="1" stroke-linecap="round" filter="url(#b06)" opacity="0.6"/><path d="M375 321.6C377.2 321.6 379.3 321.3 381.8 322.3C384.3 323.2 387.6 325.3 390 327.1C392.3 328.8 393.9 330.4 395.8 332.6C397.6 334.7 399.5 337.7 401.1 340C402.6 342.4 403.8 344.5 404.9 346.7C405.9 348.9 406.6 350.7 407.4 353.2C408.2 355.7 409.1 358.9 409.6 361.9C410.2 364.9 410.4 368.2 410.7 371.5C410.9 374.8 411.4 378.7 411.2 381.8C411.1 384.9 410.3 387.5 409.6 390.3C408.9 393.1 407.9 396 406.8 398.7C405.7 401.3 404.2 404.5 403.1 406.3C402 408 401.6 408.1 400.2 409.1C398.7 410.2 397.2 411.3 394.6 412.6C391.9 413.9 387.7 416.1 384.1 417C380.5 418 376.4 418.3 373 418.4C369.5 418.5 366.3 417.9 363.6 417.5C360.9 417 358.9 416.4 357 415.7C355 415 353.4 414.2 351.9 413.3C350.3 412.3 349.1 411.4 347.6 410.1C346.2 408.7 344.5 406.8 343.2 405.2C342 403.5 341.1 402.3 340.1 400.2C339.2 398.1 338.2 395.1 337.5 392.3C336.9 389.6 336.4 386.7 336.4 383.7C336.4 380.7 336.8 377.4 337.3 374.1C337.9 370.8 338.8 367.2 339.8 363.9C340.8 360.7 342 357.5 343.2 354.7C344.3 351.9 345.5 349.6 346.7 347.1C348 344.7 349.2 342.4 350.8 339.9C352.3 337.3 354.4 334.3 356.2 332.1C357.9 329.9 359.1 328.3 361.2 326.7C363.2 325 366 323.1 368.3 322.2C370.7 321.4 372.8 321.6 375 321.6Z" fill="#646464" filter="url(#b2)" opacity="0.6"/><path d="M375 308.6C378.7 308.6 382.3 308.7 386 310C389.8 311.3 394.3 314.1 397.5 316.5C400.8 318.8 403.1 321.2 405.5 324C407.9 326.7 410.1 330.1 412 333C413.8 335.8 415.3 338.4 416.6 341.1C417.9 343.8 418.8 346.2 419.8 349.3C420.7 352.4 421.8 356 422.4 359.6C423 363.1 423.3 366.6 423.6 370.5C423.9 374.3 424.5 378.8 424.2 382.6C424 386.5 423.1 390 422.2 393.5C421.3 397 420.2 400.3 418.8 403.7C417.4 407 415.6 411 413.8 413.6C412.1 416.2 410.5 417.5 408.3 419.3C406 421.1 403.8 422.5 400.3 424.2C396.9 425.9 392 428.4 387.5 429.6C383 430.8 377.7 431.3 373.3 431.4C369 431.5 364.9 430.9 361.5 430.3C358 429.7 355.3 428.9 352.5 428C349.8 427 347.4 425.8 345.1 424.4C342.8 423 340.8 421.5 338.8 419.6C336.7 417.7 334.6 415.3 332.8 412.9C331.1 410.6 329.6 408.5 328.3 405.5C326.9 402.6 325.7 398.8 324.9 395.2C324 391.6 323.5 387.8 323.4 383.9C323.3 380 323.9 375.9 324.5 372C325.2 368 326.2 363.9 327.4 360.2C328.5 356.5 329.9 352.9 331.2 349.8C332.5 346.6 333.7 344 335.1 341.2C336.6 338.4 337.9 335.8 339.8 332.9C341.6 330 343.9 326.6 346.1 323.8C348.4 321.1 350.3 318.7 353.2 316.4C356.2 314.1 360.4 311.2 364 310C367.6 308.7 371.3 308.6 375 308.6Z" fill="#fff" filter="url(#grain)" opacity="0.10"/><g filter="url(#b06)"><ellipse cx="366" cy="396" rx="7" ry="5.5" fill="#4a4a4a" filter="url(#b1)"/><ellipse cx="381.5" cy="396" rx="7" ry="5.5" fill="#4a4a4a" filter="url(#b1)"/><path d="M374.6 360 L374.2 428" stroke="#3c3c3c" stroke-width="0.8" opacity="0.8"/><path d="M375.6 313 L375.2 334" stroke="#d4d4d4" stroke-width="0.7"/><path d="M375.3 330 L375.2 336" stroke="#d8d060" stroke-width="0.9"/><path d="M372.5 311.5 L379 311.5 L375.7 315.5Z" fill="#f0f0f0"/><path d="M363 428.5 L368 424.8 L372 427 L376 424.6 L381 428.3 L372 429.8Z" fill="#f4f4f4"/><circle cx="374.3" cy="386.6" r="0.8" fill="#ddd"/><circle cx="352" cy="315.5" r="0.55" fill="#dcdcdc"/><circle cx="369" cy="313" r="0.55" fill="#dcdcdc"/><circle cx="381" cy="313.4" r="0.55" fill="#dcdcdc"/><circle cx="400.5" cy="322.5" r="0.55" fill="#dcdcdc"/><circle cx="334.5" cy="347.5" r="0.55" fill="#dcdcdc"/><circle cx="331.5" cy="357" r="0.55" fill="#dcdcdc"/><circle cx="412.5" cy="344" r="0.55" fill="#dcdcdc"/><circle cx="414.5" cy="352" r="0.55" fill="#dcdcdc"/><circle cx="417" cy="362" r="0.55" fill="#dcdcdc"/><circle cx="325.5" cy="388" r="0.55" fill="#dcdcdc"/><circle cx="326.5" cy="393.5" r="0.55" fill="#dcdcdc"/><circle cx="330" cy="399" r="0.55" fill="#dcdcdc"/><circle cx="335.5" cy="409" r="0.55" fill="#dcdcdc"/><circle cx="407" cy="388" r="0.55" fill="#dcdcdc"/><circle cx="362" cy="416.5" r="0.55" fill="#dcdcdc"/><circle cx="377.5" cy="416" r="0.55" fill="#dcdcdc"/><circle cx="365" cy="427.5" r="0.55" fill="#dcdcdc"/><circle cx="384" cy="427.5" r="0.55" fill="#dcdcdc"/></g><path d="M380.5 335.9C382.4 335.8 384 336.4 385.5 337.3C387 338.2 388.4 339.5 389.3 341C390.2 342.5 390.7 344.7 390.8 346.5C390.9 348.3 390.6 350.3 389.8 352C389.1 353.7 387.8 355.6 386.3 356.8C384.8 358 382.8 359 381 359.2C379.2 359.4 376.9 358.7 375.3 357.8C373.7 356.9 372.4 355.4 371.3 353.8C370.2 352.2 369.1 350 368.9 348C368.6 346 369 343.7 369.8 342C370.6 340.3 372 338.6 373.8 337.6C375.6 336.6 378.6 335.9 380.5 335.9Z" style="fill:var(--tf,#c9c9c9)"/><g style="opacity:var(--to,1)"><path d="M380.5 335.9C382.4 335.8 384 336.4 385.5 337.3C387 338.2 388.4 339.5 389.3 341C390.2 342.5 390.7 344.7 390.8 346.5C390.9 348.3 390.6 350.3 389.8 352C389.1 353.7 387.8 355.6 386.3 356.8C384.8 358 382.8 359 381 359.2C379.2 359.4 376.9 358.7 375.3 357.8C373.7 356.9 372.4 355.4 371.3 353.8C370.2 352.2 369.1 350 368.9 348C368.6 346 369 343.7 369.8 342C370.6 340.3 372 338.6 373.8 337.6C375.6 336.6 378.6 335.9 380.5 335.9Z" fill="#ededed" filter="url(#blot)" opacity="0.6"/></g><g style="opacity:var(--tg,0)"><path d="M380.5 335.9C382.4 335.8 384 336.4 385.5 337.3C387 338.2 388.4 339.5 389.3 341C390.2 342.5 390.7 344.7 390.8 346.5C390.9 348.3 390.6 350.3 389.8 352C389.1 353.7 387.8 355.6 386.3 356.8C384.8 358 382.8 359 381 359.2C379.2 359.4 376.9 358.7 375.3 357.8C373.7 356.9 372.4 355.4 371.3 353.8C370.2 352.2 369.1 350 368.9 348C368.6 346 369 343.7 369.8 342C370.6 340.3 372 338.6 373.8 337.6C375.6 336.6 378.6 335.9 380.5 335.9Z" fill="#5a8f5c" filter="url(#blot)" opacity="0.55"/></g><path d="M380.5 335.9C382.4 335.8 384 336.4 385.5 337.3C387 338.2 388.4 339.5 389.3 341C390.2 342.5 390.7 344.7 390.8 346.5C390.9 348.3 390.6 350.3 389.8 352C389.1 353.7 387.8 355.6 386.3 356.8C384.8 358 382.8 359 381 359.2C379.2 359.4 376.9 358.7 375.3 357.8C373.7 356.9 372.4 355.4 371.3 353.8C370.2 352.2 369.1 350 368.9 348C368.6 346 369 343.7 369.8 342C370.6 340.3 372 338.6 373.8 337.6C375.6 336.6 378.6 335.9 380.5 335.9Z" fill="none" style="stroke:var(--ts,#c3d24e);stroke-width:var(--tw,0.6px)"/><rect x="341.3" y="310.4" width="72.6" height="76.0" fill="none" style="stroke:var(--rc,#b39b58);stroke-width:var(--rw,0.55px)"/></g><g id="sag"><rect x="440" y="296" width="215" height="146" fill="#000"/><clipPath id="sgclip"><path d="M455 420C455.5 419.5 456.9 418.2 458 417C459.1 415.8 460.2 415 461.5 413C462.8 411 464.2 407.8 466 405C467.8 402.2 470.9 399.3 472.4 396C473.8 392.7 474.2 389 474.7 385C475.2 381 474.9 375.8 475.2 372C475.5 368.2 475.7 365 476.5 362C477.3 359 478.7 356.7 480 354C481.3 351.3 482.7 348.5 484.5 346C486.3 343.5 488.8 341 491 338.8C493.2 336.6 495.4 334.8 498 333C500.6 331.2 503.7 329.5 506.5 328C509.3 326.5 511.9 325.3 515 324C518.1 322.7 521.7 321.2 525 320C528.3 318.8 531.7 317.8 535 316.8C538.3 315.8 542 314.8 545 314C548 313.2 550.5 312.6 553 312.2C555.5 311.8 557.3 311.3 560 311.3C562.7 311.3 565.9 311.4 569 312C572.1 312.6 575.8 313.4 578.8 314.7C581.8 315.9 584.4 317.6 587 319.5C589.6 321.4 591.9 324 594.3 326.4C596.7 328.8 599.2 331.4 601.5 334C603.8 336.6 606.3 339 608.3 341.9C610.3 344.8 612 348.1 613.5 351.5C615 354.9 616.6 358.6 617.6 362C618.6 365.4 619.2 369 619.6 372C620 375 619.9 377.5 619.8 380C619.7 382.5 619.5 384.5 619 387C618.5 389.5 617.8 392.2 617 395C616.2 397.8 615.4 400.5 614.5 403.8C613.6 407.1 612.5 411.1 611.5 415C610.5 418.9 608.8 425 608.3 427L608.3 427 L455 427Z"/></clipPath><g filter="url(#b03)"><path d="M455 420C455.5 419.5 456.9 418.2 458 417C459.1 415.8 460.2 415 461.5 413C462.8 411 464.2 407.8 466 405C467.8 402.2 470.9 399.3 472.4 396C473.8 392.7 474.2 389 474.7 385C475.2 381 474.9 375.8 475.2 372C475.5 368.2 475.7 365 476.5 362C477.3 359 478.7 356.7 480 354C481.3 351.3 482.7 348.5 484.5 346C486.3 343.5 488.8 341 491 338.8C493.2 336.6 495.4 334.8 498 333C500.6 331.2 503.7 329.5 506.5 328C509.3 326.5 511.9 325.3 515 324C518.1 322.7 521.7 321.2 525 320C528.3 318.8 531.7 317.8 535 316.8C538.3 315.8 542 314.8 545 314C548 313.2 550.5 312.6 553 312.2C555.5 311.8 557.3 311.3 560 311.3C562.7 311.3 565.9 311.4 569 312C572.1 312.6 575.8 313.4 578.8 314.7C581.8 315.9 584.4 317.6 587 319.5C589.6 321.4 591.9 324 594.3 326.4C596.7 328.8 599.2 331.4 601.5 334C603.8 336.6 606.3 339 608.3 341.9C610.3 344.8 612 348.1 613.5 351.5C615 354.9 616.6 358.6 617.6 362C618.6 365.4 619.2 369 619.6 372C620 375 619.9 377.5 619.8 380C619.7 382.5 619.5 384.5 619 387C618.5 389.5 617.8 392.2 617 395C616.2 397.8 615.4 400.5 614.5 403.8C613.6 407.1 612.5 411.1 611.5 415C610.5 418.9 608.8 425 608.3 427L608.3 427 L455 427Z" fill="#262626"/><g clip-path="url(#sgclip)"><path d="M466 405C467.1 403.5 470.9 399.3 472.4 396C473.8 392.7 474.2 389 474.7 385C475.2 381 474.9 375.8 475.2 372C475.5 368.2 475.7 365 476.5 362C477.3 359 478.7 356.7 480 354C481.3 351.3 482.7 348.5 484.5 346C486.3 343.5 488.8 341 491 338.8C493.2 336.6 495.4 334.8 498 333C500.6 331.2 503.7 329.5 506.5 328C509.3 326.5 511.9 325.3 515 324C518.1 322.7 521.7 321.2 525 320C528.3 318.8 531.7 317.8 535 316.8C538.3 315.8 542 314.8 545 314C548 313.2 550.5 312.6 553 312.2C555.5 311.8 557.3 311.3 560 311.3C562.7 311.3 565.9 311.4 569 312C572.1 312.6 575.8 313.4 578.8 314.7C581.8 315.9 584.4 317.6 587 319.5C589.6 321.4 591.9 324 594.3 326.4C596.7 328.8 599.2 331.4 601.5 334C603.8 336.6 606.3 339 608.3 341.9C610.3 344.8 612 348.1 613.5 351.5C615 354.9 616.6 358.6 617.6 362C618.6 365.4 619.2 369 619.6 372C620 375 619.9 377.5 619.8 380C619.7 382.5 619.5 384.5 619 387C618.5 389.5 617.8 392.2 617 395C616.2 397.8 615.4 400.5 614.5 403.8C613.6 407.1 612.5 411.1 611.5 415C610.5 418.9 608.8 425 608.3 427" fill="none" stroke="#dadada" stroke-width="6.6"/><path d="M578.8 314.7C580.2 315.5 584.4 317.6 587 319.5C589.6 321.4 591.9 324 594.3 326.4C596.7 328.8 599.2 331.4 601.5 334C603.8 336.6 606.3 339 608.3 341.9C610.3 344.8 612 348.1 613.5 351.5C615 354.9 616.6 358.6 617.6 362C618.6 365.4 619.2 369 619.6 372C620 375 619.9 377.5 619.8 380C619.7 382.5 619.5 384.5 619 387C618.5 389.5 617.8 392.2 617 395C616.2 397.8 615.4 400.5 614.5 403.8C613.6 407.1 612.5 411.1 611.5 415C610.5 418.9 608.8 425 608.3 427" fill="none" stroke="#dadada" stroke-width="7.3"/><path d="M594.3 326.4C595.5 327.7 599.2 331.4 601.5 334C603.8 336.6 606.3 339 608.3 341.9C610.3 344.8 612 348.1 613.5 351.5C615 354.9 616.6 358.6 617.6 362C618.6 365.4 619.2 369 619.6 372C620 375 619.9 377.5 619.8 380C619.7 382.5 619.5 384.5 619 387C618.5 389.5 617.8 392.2 617 395C616.2 397.8 615.4 400.5 614.5 403.8C613.6 407.1 612.5 411.1 611.5 415C610.5 418.9 608.8 425 608.3 427" fill="none" stroke="#dadada" stroke-width="8"/><path d="M608.3 341.9C609.2 343.5 612 348.1 613.5 351.5C615 354.9 616.6 358.6 617.6 362C618.6 365.4 619.2 369 619.6 372C620 375 619.9 377.5 619.8 380C619.7 382.5 619.5 384.5 619 387C618.5 389.5 617.8 392.2 617 395C616.2 397.8 615.4 400.5 614.5 403.8C613.6 407.1 612.5 411.1 611.5 415C610.5 418.9 608.8 425 608.3 427" fill="none" stroke="#dadada" stroke-width="8.7"/><path d="M617.6 362C617.9 363.7 619.2 369 619.6 372C620 375 619.9 377.5 619.8 380C619.7 382.5 619.5 384.5 619 387C618.5 389.5 617.8 392.2 617 395C616.2 397.8 615.4 400.5 614.5 403.8C613.6 407.1 612.5 411.1 611.5 415C610.5 418.9 608.8 425 608.3 427" fill="none" stroke="#dadada" stroke-width="9.4"/><path d="M568.6 314.2C570.2 314.6 575.1 315.5 578 316.7C580.8 317.9 583.2 319.4 585.7 321.3C588.1 323.1 590.4 325.6 592.7 328C595.1 330.3 597.6 332.9 599.9 335.5C602.2 338 604.5 340.3 606.5 343.1C608.4 346 610 349.2 611.5 352.4C613 355.7 614.5 359.3 615.5 362.6C616.5 365.9 617.1 369.4 617.4 372.3C617.8 375.1 617.7 377.5 617.6 379.9C617.5 382.3 617.3 384.2 616.8 386.6C616.4 389 615.6 391.7 614.9 394.4C614.1 397.2 613.3 399.9 612.4 403.2C611.5 406.6 609.9 412.6 609.4 414.4" fill="none" stroke="#8a8a8a" stroke-width="0.6"/></g><path d="M482.2 372C482.1 368.7 482.8 364.8 483.5 362C484.2 359.2 485.2 357.3 486.5 355C487.8 352.7 489.2 350.2 491 348C492.8 345.8 494.8 343.9 497 342C499.2 340.1 501.5 338.2 504 336.5C506.5 334.8 509.2 333.4 512 332C514.8 330.6 517.8 329.3 521 328C524.2 326.7 527.7 325.5 531 324.4C534.3 323.3 537.7 322.2 541 321.3C544.3 320.4 547.8 319.6 551 319C554.2 318.4 557 318 560 318C563 318 566.2 318.2 569 318.8C571.8 319.4 574.4 320.2 577 321.3C579.6 322.4 582.2 323.7 584.5 325.3C586.8 326.9 588.8 328.9 591 331C593.2 333.1 595.5 335.5 597.5 338C599.5 340.5 601.3 343.2 603 346C604.7 348.8 606.2 352 607.5 355C608.8 358 609.7 361 610.5 364C611.3 367 612 370 612.2 373C612.5 376 612.4 379.2 612 382C611.6 384.8 610.9 387.5 610 390C609.1 392.5 607.6 394.8 606.5 397C605.4 399.2 604.8 400.7 603.5 403C602.2 405.3 601.1 408.5 599 411C596.9 413.5 594 416.1 591 418C588 419.9 584.3 421.5 581 422.5C577.7 423.5 574.2 423.3 571 424C567.8 424.7 564.8 426.3 562 426.8C559.2 427.3 555.8 428.1 554 426.8C552.2 425.5 552 421.8 551 419C550 416.2 548.9 413 548 410C547.1 407 546.7 403.6 545.5 401C544.3 398.4 543.1 396.1 541 394.5C538.9 392.9 535.7 392.2 533 391.5C530.3 390.8 528 390.2 525 390C522 389.8 518.3 390.5 515 390.5C511.7 390.5 508.3 390.2 505 390C501.7 389.8 497.9 389.5 495 389C492.1 388.5 489.4 388.2 487.5 387C485.6 385.8 484.7 384.5 483.8 382C482.9 379.5 482.2 375.3 482.2 372Z" fill="#5a5a5a" stroke="#171717" stroke-width="4.4"/><path d="M481.3 372C481.5 370.3 481.9 364.7 482.6 361.8C483.4 358.9 484.4 357 485.7 354.6C487 352.2 488.5 349.6 490.3 347.4C492.1 345.2 494.2 343.3 496.4 341.3C498.6 339.4 501 337.4 503.5 335.8C506 334.1 508.7 332.6 511.6 331.2C514.5 329.8 517.5 328.4 520.7 327.2C523.9 325.9 527.4 324.7 530.7 323.5C534.1 322.4 537.4 321.3 540.8 320.4C544.1 319.5 547.6 318.7 550.8 318.1C554.1 317.6 556.9 317.1 560 317.1C563 317.1 566.3 317.4 569.2 317.9C572.1 318.5 574.7 319.4 577.3 320.5C580 321.6 582.6 322.9 585 324.6C587.4 326.2 589.4 328.2 591.6 330.4C593.8 332.5 596.2 334.9 598.2 337.4C600.2 340 602.1 342.7 603.8 345.5C605.5 348.4 607.1 351.6 608.3 354.7C609.6 357.7 610.6 360.7 611.4 363.8C612.2 366.8 612.8 369.9 613.1 372.9C613.4 376 613.3 379.2 612.9 382.1C612.5 385 611.8 387.8 610.8 390.3C609.9 392.9 608.4 395.2 607.3 397.4C606.2 399.6 605.6 401.1 604.3 403.4C603 405.8 601.8 409 599.7 411.6C597.6 414.1 594.6 416.8 591.5 418.8C588.4 420.7 584.6 422.3 581.3 423.4C577.9 424.4 574.4 424.2 571.2 424.9C568 425.6 563.7 427.2 562.1 427.7" fill="none" stroke="#8e8e8e" stroke-width="0.5"/><path d="M482.2 372C482.1 368.7 482.8 364.8 483.5 362C484.2 359.2 485.2 357.3 486.5 355C487.8 352.7 489.2 350.2 491 348C492.8 345.8 494.8 343.9 497 342C499.2 340.1 501.5 338.2 504 336.5C506.5 334.8 509.2 333.4 512 332C514.8 330.6 517.8 329.3 521 328C524.2 326.7 527.7 325.5 531 324.4C534.3 323.3 537.7 322.2 541 321.3C544.3 320.4 547.8 319.6 551 319C554.2 318.4 557 318 560 318C563 318 566.2 318.2 569 318.8C571.8 319.4 574.4 320.2 577 321.3C579.6 322.4 582.2 323.7 584.5 325.3C586.8 326.9 588.8 328.9 591 331C593.2 333.1 595.5 335.5 597.5 338C599.5 340.5 601.3 343.2 603 346C604.7 348.8 606.2 352 607.5 355C608.8 358 609.7 361 610.5 364C611.3 367 612 370 612.2 373C612.5 376 612.4 379.2 612 382C611.6 384.8 610.9 387.5 610 390C609.1 392.5 607.6 394.8 606.5 397C605.4 399.2 604.8 400.7 603.5 403C602.2 405.3 601.1 408.5 599 411C596.9 413.5 594 416.1 591 418C588 419.9 584.3 421.5 581 422.5C577.7 423.5 574.2 423.3 571 424C567.8 424.7 564.8 426.3 562 426.8C559.2 427.3 555.8 428.1 554 426.8C552.2 425.5 552 421.8 551 419C550 416.2 548.9 413 548 410C547.1 407 546.7 403.6 545.5 401C544.3 398.4 543.1 396.1 541 394.5C538.9 392.9 535.7 392.2 533 391.5C530.3 390.8 528 390.2 525 390C522 389.8 518.3 390.5 515 390.5C511.7 390.5 508.3 390.2 505 390C501.7 389.8 497.9 389.5 495 389C492.1 388.5 489.4 388.2 487.5 387C485.6 385.8 484.7 384.5 483.8 382C482.9 379.5 482.2 375.3 482.2 372Z" fill="#5a5a5a"/><path d="M477.5 371 L482.5 370 L484.5 388 L500 390.5 L540 392.5 L545 400 L548 412 L552 427 L527 427 L527 411 L521 400 L505 392 L480 393 L476.5 386Z" fill="#101010"/></g><path d="M491.2 371.9C473.5 367.1 491.7 366.3 492.2 364.2C492.8 362.1 493.5 361 494.4 359.2C495.4 357.5 496.6 355.4 498 353.7C499.4 351.9 501.1 350.4 503 348.7C504.8 347.1 506.8 345.4 509 344C511.2 342.5 513.5 341.3 516 340C518.6 338.8 521.4 337.5 524.3 336.4C527.3 335.2 530.7 334 533.9 332.9C537 331.9 540.2 330.8 543.3 330C546.5 329.1 549.7 328.4 552.5 327.9C555.3 327.4 557.6 327 560.1 327C562.6 327 565 327.2 567.3 327.6C569.5 328.1 571.5 328.8 573.5 329.6C575.5 330.4 577.5 331.4 579.4 332.7C581.2 334 582.9 335.6 584.7 337.4C586.6 339.3 588.7 341.4 590.5 343.6C592.2 345.8 593.8 348.1 595.2 350.6C596.7 353 598.1 355.8 599.2 358.5C600.3 361.1 601.1 363.7 601.8 366.3C602.5 368.8 603 371.3 603.2 373.7C603.4 376.2 603.4 378.7 603.1 380.8C602.8 383 602.3 384.9 601.6 386.9C600.8 388.9 616.8 395.5 598.5 393C580.1 390.5 508.9 376.7 491.2 371.9Z" fill="#666" filter="url(#b2)" opacity="0.8"/><path d="M482.2 372C482.1 368.7 482.8 364.8 483.5 362C484.2 359.2 485.2 357.3 486.5 355C487.8 352.7 489.2 350.2 491 348C492.8 345.8 494.8 343.9 497 342C499.2 340.1 501.5 338.2 504 336.5C506.5 334.8 509.2 333.4 512 332C514.8 330.6 517.8 329.3 521 328C524.2 326.7 527.7 325.5 531 324.4C534.3 323.3 537.7 322.2 541 321.3C544.3 320.4 547.8 319.6 551 319C554.2 318.4 557 318 560 318C563 318 566.2 318.2 569 318.8C571.8 319.4 574.4 320.2 577 321.3C579.6 322.4 582.2 323.7 584.5 325.3C586.8 326.9 588.8 328.9 591 331C593.2 333.1 595.5 335.5 597.5 338C599.5 340.5 601.3 343.2 603 346C604.7 348.8 606.2 352 607.5 355C608.8 358 609.7 361 610.5 364C611.3 367 612 370 612.2 373C612.5 376 612.4 379.2 612 382C611.6 384.8 610.9 387.5 610 390C609.1 392.5 607.6 394.8 606.5 397C605.4 399.2 604.8 400.7 603.5 403C602.2 405.3 601.1 408.5 599 411C596.9 413.5 594 416.1 591 418C588 419.9 584.3 421.5 581 422.5C577.7 423.5 574.2 423.3 571 424C567.8 424.7 564.8 426.3 562 426.8C559.2 427.3 555.8 428.1 554 426.8C552.2 425.5 552 421.8 551 419C550 416.2 548.9 413 548 410C547.1 407 546.7 403.6 545.5 401C544.3 398.4 543.1 396.1 541 394.5C538.9 392.9 535.7 392.2 533 391.5C530.3 390.8 528 390.2 525 390C522 389.8 518.3 390.5 515 390.5C511.7 390.5 508.3 390.2 505 390C501.7 389.8 497.9 389.5 495 389C492.1 388.5 489.4 388.2 487.5 387C485.6 385.8 484.7 384.5 483.8 382C482.9 379.5 482.2 375.3 482.2 372Z" fill="#303030" filter="url(#sulci)" opacity="0.4"/><path d="M482.1 373.2C482.6 372.8 484 371.2 485.1 371C486.2 370.7 487.5 371.3 488.7 371.6C489.9 371.9 491.8 372.7 492.4 372.9M483.3 364.9C483.9 364.6 485.8 363.6 487 363.2C488.2 362.9 489.5 362.8 490.7 362.7C492 362.6 493.9 362.9 494.5 362.9M486.2 355.7C487 355.7 489.3 355.1 490.8 355.3C492.2 355.6 493.6 357 495 357.5C496.4 358 498.6 358.4 499.4 358.6M490.5 350.7C491 351.2 492.3 352.7 493.5 353.4C494.6 354.1 496.4 354.1 497.4 354.9C498.4 355.8 499.1 357.9 499.5 358.5M497.4 354.9L497.8 358.1M495.7 344.2C496.3 344.5 498.3 345.4 499.7 346C501 346.5 502.5 346.8 503.8 347.5C505.1 348.3 506.7 349.9 507.2 350.4M503.8 347.5L503.7 350.2M500.2 338.4C500.6 338.8 501.5 340 502.2 340.8C502.8 341.6 504 342 504.3 343C504.7 344 504.3 346.2 504.3 346.8M504.3 343L502.3 346.6M507.8 334.7C508 335.3 508.2 337.1 508.8 338.1C509.5 339.1 511.2 339.6 511.8 340.6C512.5 341.5 512.7 343.4 512.9 343.9M515.7 330.9C516 331.5 517.9 333.3 517.7 334.6C517.5 335.9 514.5 337.5 514.5 338.8C514.5 340.1 517.1 341.8 517.7 342.4M514.5 338.8L510.6 341.5M523.8 327.2C524.5 327.7 527.2 328.4 528 329.9C528.9 331.4 528 334.5 528.8 336C529.6 337.5 532.3 338.3 533 338.7M528.8 336L531.8 335.8M529.8 325.1C529.9 325.7 530 327.4 530.2 328.5C530.5 329.7 531.1 330.8 531.2 331.9C531.3 333.1 530.9 334.7 530.8 335.3M531.2 331.9L527.5 333.1M537.5 322.6C538.2 323 541.4 323.6 542.2 325C543 326.4 541.6 329.4 542.2 331C542.8 332.5 545.1 333.8 545.7 334.3M545.7 320.3C546.2 320.7 548.7 321.8 549 323.1C549.3 324.4 546.9 326.7 547.2 328C547.6 329.3 550.3 330.3 550.9 330.7M553.6 318.9C553.7 319.3 553.8 320.8 554.1 321.7C554.4 322.6 555.3 323.4 555.5 324.4C555.7 325.3 555.3 326.8 555.2 327.3M560.9 318C561.2 318.4 562.3 319.6 562.6 320.5C562.9 321.4 562.6 322.4 562.7 323.4C562.7 324.4 562.8 325.9 562.9 326.4M562.7 323.4L561.6 325.8M570.3 318.9C569.8 319.6 567.6 321.7 567.1 323.3C566.6 324.9 567.6 326.8 567.4 328.4C567.1 330.1 565.9 332.3 565.6 333.1M576.7 320.9C576.3 321.1 574.7 321.8 574 322.4C573.2 323 572.5 323.7 572.2 324.7C571.8 325.6 572 327.6 572 328.1M584.6 325.1C584.1 325.7 582.6 327.4 581.7 328.7C580.8 329.9 579.8 331.1 579.4 332.5C578.9 334 579 336.7 579 337.5M591 329.2C590.2 329.4 587.4 329.4 586.1 330.5C584.8 331.5 584.7 335.2 583.1 335.7C581.5 336.2 577.7 333.8 576.6 333.5M583.1 335.7L580.9 334.2M594.8 336.1C594.1 336.2 591.6 335.6 590.5 336.5C589.5 337.3 589.5 339.8 588.8 341C588 342.3 586.4 343.3 585.9 343.8M599.5 343.1C599.1 343.1 597.6 343 596.8 343.1C595.9 343.2 595 343.3 594.2 343.7C593.4 344.1 592.3 345.2 592 345.5M604.1 349.4C603.5 349.3 601.8 348.7 600.8 348.8C599.7 348.9 598.8 350 597.7 350.2C596.7 350.5 595 350.4 594.5 350.4M597.7 350.2L596.6 352.8M608 355.5C607.6 356.3 607.4 359.2 606.1 360C604.8 360.7 601.7 359.5 600.2 360C598.6 360.5 597.4 362.4 596.8 362.9M600.2 360L597.7 359M610.5 363.5C609.9 364 608.5 366 607.2 366.7C605.9 367.4 604.3 367.5 602.7 367.7C601.1 367.9 598.5 367.7 597.7 367.7M602.7 367.7L603 372.2M611.9 373.1C611.3 373.1 609.6 373.4 608.4 373.3C607.3 373.2 606.1 372.9 605 372.6C603.8 372.3 602.1 371.6 601.5 371.4M612 379.6C611.6 379.6 610.2 379.6 609.4 379.7C608.5 379.8 607.5 380.4 606.7 380.2C605.8 379.9 604.6 378.6 604.1 378.3M606.7 380.2L603.6 376.3M611 386.5C610.4 386.8 608.5 388.7 607.1 388.6C605.8 388.5 604.2 386.2 602.8 386C601.4 385.7 599.5 387 598.8 387.2M607.6 394.6C607 394.6 605.3 395.4 604.3 395C603.3 394.5 602.8 392.1 601.8 392C600.7 391.8 598.7 393.8 598.1 394.2M601.8 392L600 387.5" fill="none" stroke="#2b2b2b" stroke-width="1.25" stroke-linecap="round" filter="url(#b03)" style="opacity:var(--so,0.9)"/><path d="M524.1 390C523.9 389.8 522.6 389.1 522.5 388.4C522.4 387.8 523.4 386.8 523.4 386.1C523.4 385.4 522.7 384.6 522.5 384.3M517.4 390.4C517.5 390.2 518.1 389.4 518.2 388.9C518.3 388.3 517.9 387.7 518 387.1C518 386.5 518.5 385.8 518.6 385.5M509.9 390.2C510 389.8 510.4 388.5 510.4 387.7C510.3 386.9 509.8 386.2 509.7 385.4C509.6 384.6 509.7 383.3 509.7 382.9M509.7 385.4L506.6 383.6M501.8 389.5C502 389.2 503.1 388.3 503.2 387.5C503.2 386.7 502.2 385.6 502.1 384.8C502 383.9 502.5 382.8 502.6 382.5M492.2 388.2C492.3 387.8 492.3 386.7 492.7 386.1C493 385.6 493.8 385.3 494.4 384.9C495 384.5 495.9 383.9 496.2 383.7M486.2 384.3C486.4 384 487.1 383.1 487.5 382.5C487.9 381.9 488.4 381.3 488.8 380.7C489.1 380.1 489.6 379 489.7 378.7M483.1 379C483.5 379 484.6 379 485.3 378.7C485.9 378.4 486.4 377.6 487 377.2C487.6 376.7 488.5 376.3 488.9 376.1" fill="none" stroke="#2f2f2f" stroke-width="1.1" stroke-linecap="round" filter="url(#b03)" opacity="0.8"/><path d="M482.2 372C482.1 368.7 482.8 364.8 483.5 362C484.2 359.2 485.2 357.3 486.5 355C487.8 352.7 489.2 350.2 491 348C492.8 345.8 494.8 343.9 497 342C499.2 340.1 501.5 338.2 504 336.5C506.5 334.8 509.2 333.4 512 332C514.8 330.6 517.8 329.3 521 328C524.2 326.7 527.7 325.5 531 324.4C534.3 323.3 537.7 322.2 541 321.3C544.3 320.4 547.8 319.6 551 319C554.2 318.4 557 318 560 318C563 318 566.2 318.2 569 318.8C571.8 319.4 574.4 320.2 577 321.3C579.6 322.4 582.2 323.7 584.5 325.3C586.8 326.9 588.8 328.9 591 331C593.2 333.1 595.5 335.5 597.5 338C599.5 340.5 601.3 343.2 603 346C604.7 348.8 606.2 352 607.5 355C608.8 358 609.7 361 610.5 364C611.3 367 612 370 612.2 373C612.5 376 612.4 379.2 612 382C611.6 384.8 610.9 387.5 610 390C609.1 392.5 607.6 394.8 606.5 397C605.4 399.2 604.8 400.7 603.5 403C602.2 405.3 601.1 408.5 599 411C596.9 413.5 594 416.1 591 418C588 419.9 584.3 421.5 581 422.5C577.7 423.5 574.2 423.3 571 424C567.8 424.7 564.8 426.3 562 426.8C559.2 427.3 555.8 428.1 554 426.8C552.2 425.5 552 421.8 551 419C550 416.2 548.9 413 548 410C547.1 407 546.7 403.6 545.5 401C544.3 398.4 543.1 396.1 541 394.5C538.9 392.9 535.7 392.2 533 391.5C530.3 390.8 528 390.2 525 390C522 389.8 518.3 390.5 515 390.5C511.7 390.5 508.3 390.2 505 390C501.7 389.8 497.9 389.5 495 389C492.1 388.5 489.4 388.2 487.5 387C485.6 385.8 484.7 384.5 483.8 382C482.9 379.5 482.2 375.3 482.2 372Z" fill="#fff" filter="url(#grain)" opacity="0.10"/><g filter="url(#b03)"><path d="M516 378 C520 368 534 362.5 548 362.5 C560 362.5 568 368 570 376 L566 392 L556 400 L548 398 L541 392 L530 389 L518 388Z" fill="#565656" filter="url(#b2)" opacity="0.7"/><path d="M519 377C519.4 375.7 520 371.4 521.5 369C523 366.6 525.2 364.2 528 362.5C530.8 360.8 534.3 359.5 538 358.8C541.7 358.1 546.2 357.9 550 358.3C553.8 358.7 558 359.6 561 361C564 362.4 566.4 365 568 367C569.6 369 570.1 372 570.5 373" fill="none" stroke="#737373" stroke-width="2.6"/><path d="M523.5 377C523.9 375.8 524.6 372 526 370C527.4 368 529.5 366.4 532 365.2C534.5 363.9 537.8 363 541 362.5C544.2 362 547.9 361.9 551 362.3C554.1 362.7 557.2 363.7 559.5 365C561.8 366.3 563.7 369.2 564.5 370" fill="none" stroke="#303030" stroke-width="1.6"/><path d="M522 372C523 371.4 526 369.4 528 368.5C530 367.6 533 366.8 534 366.5" fill="none" stroke="#252525" stroke-width="1.2"/><path d="M545 385 L556 382.5 L563 388 L564.5 400 L566.5 412 L570.5 427 L556 427 L551.5 415 L547.5 400Z" fill="#585858"/><path d="M541 394.5 L545.5 401 L548 410 L551 419 L554 427 L549 427 L545 412 L541.5 401Z" fill="#2a2a2a"/><path d="M539.6 397 L543.6 405 L546.4 416 L548.6 426" stroke="#9c9c9c" stroke-width="1.3" fill="none"/><path d="M531 398 L536 404 L535 414 L538 424" stroke="#4c4c4c" stroke-width="2.2" fill="none"/><path d="M569 378.6C570.9 377.4 575 379.6 578 380.6C581 381.6 584.2 383.1 587 384.6C589.8 386.1 592.7 388 595 389.8C597.3 391.6 599.3 393.5 600.6 395.4C601.9 397.3 603.1 398.6 603 401C602.9 403.4 601.8 406.8 600 409.5C598.2 412.2 595 415 592 417C589 419 585.2 421 582 421.5C578.8 422 575.4 421.6 573 420C570.6 418.4 568.7 415.3 567.5 412C566.3 408.7 566.2 404 566 400C565.8 396 566 391.6 566.5 388C567 384.4 567.1 379.8 569 378.6Z" fill="#555" stroke="#333" stroke-width="0.7"/><path d="M577.9 397.5 L585.3 386.5" stroke="#464646" stroke-width="0.55" opacity="0.8"/><path d="M578.7 398.0 L589.9 388.3" stroke="#464646" stroke-width="0.55" opacity="0.8"/><path d="M579.3 398.7 L594.0 391.0" stroke="#464646" stroke-width="0.55" opacity="0.8"/><path d="M579.7 399.5 L597.0 394.5" stroke="#464646" stroke-width="0.55" opacity="0.8"/><path d="M580.0 400.4 L598.7 398.5" stroke="#464646" stroke-width="0.55" opacity="0.8"/><path d="M580.0 401.4 L598.9 402.7" stroke="#464646" stroke-width="0.55" opacity="0.8"/><path d="M579.8 402.3 L597.4 406.8" stroke="#464646" stroke-width="0.55" opacity="0.8"/><path d="M579.4 403.1 L594.6 410.4" stroke="#464646" stroke-width="0.55" opacity="0.8"/><path d="M578.8 403.9 L590.7 413.3" stroke="#464646" stroke-width="0.55" opacity="0.8"/><path d="M578.0 404.4 L586.2 415.2" stroke="#464646" stroke-width="0.55" opacity="0.8"/><path d="M577.2 404.8 L581.5 416.2" stroke="#464646" stroke-width="0.55" opacity="0.8"/><path d="M576.2 405.0 L577.1 416.2" stroke="#464646" stroke-width="0.55" opacity="0.8"/><path d="M575.3 404.9 L573.2 415.3" stroke="#464646" stroke-width="0.55" opacity="0.8"/><path d="M571 399 L579 396.5" stroke="#8a8a8a" stroke-width="0.7"/><path d="M571 424 L581 422.5 L591 418 L599 411 L603.5 403 L606.5 397 L610 390 L611.5 398 L609 410 L605 427 L570.5 427Z" fill="#414141"/><path d="M588 424 L597 420.5 M600 414 L604 406" stroke="#c9c9c9" stroke-width="1.1"/><path d="M569.5 376.6C570.8 376.9 574.2 377.4 577 378.4C579.8 379.4 583.1 380.8 586 382.4C588.9 384 592 385.9 594.5 387.8C597 389.7 600.2 392.7 601.3 393.7" fill="none" stroke="#b0b0b0" stroke-width="0.75"/><path d="M601 393.6 L606 389 L610.6 384.4" stroke="#d4d4d4" stroke-width="1.1"/><circle cx="599" cy="394.4" r="1.2" fill="#f0f0f0"/><path d="M604 396 L606.5 402 L604.5 409" stroke="#1c1c1c" stroke-width="1.4" fill="none"/><circle cx="533.2" cy="393.4" r="2" fill="#e8e8e8"/><path d="M537 390.5 L540 395" stroke="#bdbdbd" stroke-width="1"/><g filter="url(#b06)"><path d="M455 419L461 413.8L466 406.5L472 397.5L478 393.5L490 392.3L504 392.2L514 395.5L521 401L526 408L528 416L527 427L455 427Z" fill="#efefef"/><path d="M475.5 399.5C476 398.6 478.9 397.6 481 397.3C483.1 397 485.7 397 488 397.6C490.3 398.2 492.9 399.7 495 401C497.1 402.3 500.2 404.4 500.5 405.5C500.8 406.6 498.8 407.6 497 407.4C495.2 407.2 492.3 404.9 490 404.3C487.7 403.7 485 403.8 483 403.6C481 403.4 479.2 403.7 478 403C476.8 402.3 475 400.4 475.5 399.5Z" fill="#1e1e1e"/><path d="M486 400.6C486.2 400 489.3 399.7 490.5 400C491.7 400.3 493.2 402 493 402.6C492.8 403.2 490.2 404.1 489 403.8C487.8 403.5 485.8 401.2 486 400.6Z" fill="#858585"/><path d="M469.5 412.5C469.7 411.3 472.2 409.6 474 408.8C475.8 408 478.2 407.5 480 407.6C481.8 407.7 484.7 408.7 485 409.5C485.3 410.3 481.8 411.6 482 412.6C482.2 413.6 486.2 414.5 486.5 415.6C486.8 416.7 485.4 418.7 484 419C482.6 419.3 479.8 418.1 478 417.6C476.2 417.1 474.4 416.9 473 416C471.6 415.1 469.3 413.7 469.5 412.5Z" fill="#161616"/><path d="M476 411C476.4 410.4 479.2 409.8 480 410C480.8 410.2 481.4 411.9 481 412.5C480.6 413.1 478.3 413.9 477.5 413.6C476.7 413.4 475.6 411.6 476 411Z" fill="#d8d8d8"/><path d="M461.5 416.6C462.3 415.9 464.9 417.1 466 417.8C467.1 418.5 468.2 419.7 468 420.6C467.8 421.5 466.2 423.2 465 423.4C463.8 423.6 461.6 423.1 461 422C460.4 420.9 460.7 417.3 461.5 416.6Z" fill="#2c2c2c"/><path d="M465.6 410C465.8 408.8 468.5 405.8 469.6 405.6C470.7 405.4 472.2 407.4 472 408.6C471.8 409.8 469.5 412.8 468.4 413C467.3 413.2 465.4 411.2 465.6 410Z" fill="#6a6a6a"/><path d="M492 419.6C494 419.3 496.7 420.8 500 421C503.3 421.2 508.3 421.1 512 420.6C515.7 420.1 519.7 418.1 522 418C524.3 417.9 525.2 419.1 526 420C526.8 420.9 529.2 422.9 526.5 423.6C523.8 424.3 515.4 424.2 510 424.4C504.6 424.6 497.7 424.9 494 424.6C490.3 424.3 488.3 423.4 488 422.6C487.7 421.8 490 419.9 492 419.6Z" fill="#4a4a4a"/><path d="M487 409.5C488.3 409.9 492.3 411.7 495 411.6C497.7 411.5 500.3 410.2 503 409C505.7 407.8 508.3 405.5 511 404.6C513.7 403.7 517.7 403.8 519 403.6" fill="none" stroke="#8a8a8a" stroke-width="1.4"/><path d="M499.5 393.4C500.2 393 505.2 394.4 508 395.6C510.8 396.8 515.7 399.3 516.5 400.4C517.3 401.5 515.1 402.4 513 402C510.9 401.6 506.2 399.4 504 398C501.8 396.6 498.8 393.8 499.5 393.4Z" fill="#2e2e2e"/><path d="M479 394.4C480.7 393.6 485.8 392.9 490 392.6C494.2 392.3 500.2 392.1 504 392.6C507.8 393.1 510.4 394.3 513 395.6C515.6 396.9 519.1 399.4 519.6 400.4C520.1 401.4 518.1 401.9 516 401.6C513.9 401.3 510.3 399.1 507 398.6C503.7 398.1 499.5 398.6 496 398.4C492.5 398.2 488.7 397.3 486 397.2C483.3 397.1 481.2 398.1 480 397.6C478.8 397.1 477.3 395.2 479 394.4Z" fill="#6e6e6e"/><path d="M484 393 L486 397 M492 392.6 L493 398 M500 392.6 L500 398 M507 393.4 L506 398" stroke="#dcdcdc" stroke-width="0.8"/><path d="M492 401C493.2 401.2 496.7 401.9 499 402.4C501.3 402.9 503.7 403.4 506 404C508.3 404.6 510.7 405.2 513 406C515.3 406.8 518.8 408.5 520 409" fill="none" stroke="#2a2a2a" stroke-width="1"/><path d="M476 418C477.2 418.3 480.7 419.4 483 420C485.3 420.6 488.8 421.2 490 421.4" fill="none" stroke="#2a2a2a" stroke-width="1"/><path d="M503 410.6C505 409.7 508.8 409.4 512 409.4C515.2 409.4 519.6 409.6 522 410.4C524.4 411.2 525.9 412.6 526.4 414C526.9 415.4 527.1 418 525 419C522.9 420 517.5 420 514 420C510.5 420 506.3 419.8 504 419C501.7 418.2 500.2 416.4 500 415C499.8 413.6 501 411.5 503 410.6Z" fill="#b4b4b4"/><path d="M455 425.8 L527 425.4 L527 427.4 L455 427.4Z" fill="#141414"/></g><path d="M497 404 L527 402 L528 424 L494 424Z" fill="#000" filter="url(#grain)" opacity="0.45"/><path d="M476.5 372 L478 386 L474.5 396" stroke="#f2f2f2" stroke-width="2.2" fill="none"/><path d="M480 371 L481.5 387" stroke="#101010" stroke-width="2.6" fill="none"/><circle cx="517.5" cy="333.5" r="0.55" fill="#dcdcdc"/><circle cx="507.5" cy="340" r="0.55" fill="#dcdcdc"/><circle cx="577" cy="325.5" r="0.55" fill="#dcdcdc"/><circle cx="584.5" cy="330.5" r="0.55" fill="#dcdcdc"/><circle cx="598" cy="346" r="0.55" fill="#dcdcdc"/><circle cx="603" cy="353.5" r="0.55" fill="#dcdcdc"/><circle cx="544.5" cy="322" r="0.55" fill="#dcdcdc"/><circle cx="558.5" cy="361.5" r="0.55" fill="#dcdcdc"/><circle cx="548.5" cy="363.2" r="0.55" fill="#dcdcdc"/><circle cx="553.5" cy="364" r="0.55" fill="#dcdcdc"/></g><path d="M524.5 334C526.4 333.9 528.3 334.4 530 335.2C531.7 335.9 533.4 337.2 534.5 338.5C535.6 339.8 536 341.3 536.4 343C536.8 344.7 537 346.7 536.9 348.5C536.8 350.3 536.4 352.4 535.6 354C534.8 355.6 533.5 356.9 532 358C530.5 359.1 528.4 359.8 526.5 360.3C524.6 360.8 522.3 361 520.5 360.8C518.7 360.6 516.7 360.1 515.5 359C514.3 357.9 513.9 356.1 513.3 354.5C512.6 352.9 511.8 351.2 511.6 349.5C511.4 347.8 511.6 345.7 512.2 344C512.8 342.3 514 340.8 515 339.5C516 338.2 516.9 336.9 518.5 336C520.1 335.1 522.6 334.1 524.5 334Z" style="fill:var(--tf,#c9c9c9)"/><g style="opacity:var(--to,1)"><path d="M524.5 334C526.4 333.9 528.3 334.4 530 335.2C531.7 335.9 533.4 337.2 534.5 338.5C535.6 339.8 536 341.3 536.4 343C536.8 344.7 537 346.7 536.9 348.5C536.8 350.3 536.4 352.4 535.6 354C534.8 355.6 533.5 356.9 532 358C530.5 359.1 528.4 359.8 526.5 360.3C524.6 360.8 522.3 361 520.5 360.8C518.7 360.6 516.7 360.1 515.5 359C514.3 357.9 513.9 356.1 513.3 354.5C512.6 352.9 511.8 351.2 511.6 349.5C511.4 347.8 511.6 345.7 512.2 344C512.8 342.3 514 340.8 515 339.5C516 338.2 516.9 336.9 518.5 336C520.1 335.1 522.6 334.1 524.5 334Z" fill="#ededed" filter="url(#blot)" opacity="0.6"/></g><g style="opacity:var(--tg,0)"><path d="M524.5 334C526.4 333.9 528.3 334.4 530 335.2C531.7 335.9 533.4 337.2 534.5 338.5C535.6 339.8 536 341.3 536.4 343C536.8 344.7 537 346.7 536.9 348.5C536.8 350.3 536.4 352.4 535.6 354C534.8 355.6 533.5 356.9 532 358C530.5 359.1 528.4 359.8 526.5 360.3C524.6 360.8 522.3 361 520.5 360.8C518.7 360.6 516.7 360.1 515.5 359C514.3 357.9 513.9 356.1 513.3 354.5C512.6 352.9 511.8 351.2 511.6 349.5C511.4 347.8 511.6 345.7 512.2 344C512.8 342.3 514 340.8 515 339.5C516 338.2 516.9 336.9 518.5 336C520.1 335.1 522.6 334.1 524.5 334Z" fill="#5a8f5c" filter="url(#blot)" opacity="0.55"/></g><path d="M524.5 334C526.4 333.9 528.3 334.4 530 335.2C531.7 335.9 533.4 337.2 534.5 338.5C535.6 339.8 536 341.3 536.4 343C536.8 344.7 537 346.7 536.9 348.5C536.8 350.3 536.4 352.4 535.6 354C534.8 355.6 533.5 356.9 532 358C530.5 359.1 528.4 359.8 526.5 360.3C524.6 360.8 522.3 361 520.5 360.8C518.7 360.6 516.7 360.1 515.5 359C514.3 357.9 513.9 356.1 513.3 354.5C512.6 352.9 511.8 351.2 511.6 349.5C511.4 347.8 511.6 345.7 512.2 344C512.8 342.3 514 340.8 515 339.5C516 338.2 516.9 336.9 518.5 336C520.1 335.1 522.6 334.1 524.5 334Z" fill="none" style="stroke:var(--ts,#c3d24e);stroke-width:var(--tw,0.6px)"/><rect x="485.6" y="324" width="77.7" height="65.0" fill="none" style="stroke:var(--rc,#b39b58);stroke-width:var(--rw,0.55px)"/></g><g id="cor"><rect x="610" y="296" width="215" height="146" fill="#000"/><clipPath id="coclip"><path d="M668.6 427C668.4 425.3 667.9 420.4 667.5 417C667.1 413.6 666.5 410 666 406.5C665.5 403 664.9 399.5 664.3 396C663.7 392.5 663.1 388.7 662.5 385.5C661.9 382.3 661.3 379.9 660.9 377C660.5 374.1 660.2 371.2 660.3 368C660.3 364.8 660.7 361.2 661.2 358C661.7 354.8 662.3 351.8 663.3 349C664.3 346.2 665.4 343.7 667 341C668.6 338.3 670.8 335.2 673 333C675.2 330.8 677.9 329.1 680.5 327.5C683.1 325.9 685.4 324.6 688.8 323.4C692.1 322.2 696.4 320.9 700.5 320.2C704.6 319.5 709 319 713.2 319C717.5 319 721.9 319.5 726 320.2C730.1 320.9 734.4 322.2 737.8 323.4C741.1 324.6 743.4 325.9 746 327.5C748.6 329.1 751.2 330.8 753.5 333C755.8 335.2 757.9 338.3 759.5 341C761.1 343.7 762.1 346.2 763.1 349C764.1 351.8 764.7 354.8 765.2 358C765.7 361.2 766 364.8 766 368C766 371.2 765.7 374.1 765.4 377C765.1 379.9 764.5 382.3 764 385.5C763.5 388.7 763 392.5 762.5 396C762 399.5 761.6 403 761.2 406.5C760.8 410 760.5 413.6 760.2 417C759.9 420.4 759.7 425.3 759.6 427Z"/></clipPath><g filter="url(#b03)"><path d="M668.6 427C668.4 425.3 667.9 420.4 667.5 417C667.1 413.6 666.5 410 666 406.5C665.5 403 664.9 399.5 664.3 396C663.7 392.5 663.1 388.7 662.5 385.5C661.9 382.3 661.3 379.9 660.9 377C660.5 374.1 660.2 371.2 660.3 368C660.3 364.8 660.7 361.2 661.2 358C661.7 354.8 662.3 351.8 663.3 349C664.3 346.2 665.4 343.7 667 341C668.6 338.3 670.8 335.2 673 333C675.2 330.8 677.9 329.1 680.5 327.5C683.1 325.9 685.4 324.6 688.8 323.4C692.1 322.2 696.4 320.9 700.5 320.2C704.6 319.5 709 319 713.2 319C717.5 319 721.9 319.5 726 320.2C730.1 320.9 734.4 322.2 737.8 323.4C741.1 324.6 743.4 325.9 746 327.5C748.6 329.1 751.2 330.8 753.5 333C755.8 335.2 757.9 338.3 759.5 341C761.1 343.7 762.1 346.2 763.1 349C764.1 351.8 764.7 354.8 765.2 358C765.7 361.2 766 364.8 766 368C766 371.2 765.7 374.1 765.4 377C765.1 379.9 764.5 382.3 764 385.5C763.5 388.7 763 392.5 762.5 396C762 399.5 761.6 403 761.2 406.5C760.8 410 760.5 413.6 760.2 417C759.9 420.4 759.7 425.3 759.6 427Z" fill="#d9d9d9"/><path d="M713 324C717.8 324 723.1 324.3 727.5 325C731.8 325.8 735.6 327 739.1 328.6C742.7 330.3 746.1 332.6 748.8 335.1C751.5 337.6 753.6 340.7 755.3 343.7C757 346.8 758.1 350 759 353.3C759.9 356.7 760.4 360.4 760.6 363.9C760.8 367.4 760.5 371 760.1 374.3C759.6 377.7 758.9 380.8 758 383.8C757 386.8 755.8 389.8 754.2 392.3C752.7 394.9 752.1 396.4 748.7 399C745.3 401.6 737.6 403.3 734 408C730.4 412.7 732.8 423.8 727 427C721.2 430.2 704.8 430.2 699 427C693.2 423.8 694.5 412 692 408C689.5 404 686.7 404.5 684.2 403C681.8 401.5 679.4 400.7 677.3 399C675.2 397.2 673.3 394.9 671.8 392.3C670.2 389.8 669 386.8 668 383.8C667.1 380.8 666.4 377.7 665.9 374.3C665.5 371 665.2 367.4 665.4 363.9C665.6 360.4 666.1 356.7 667 353.3C667.9 350 669 346.8 670.7 343.7C672.4 340.7 674.5 337.6 677.2 335.1C679.9 332.6 683.3 330.3 686.9 328.6C690.4 327 694.2 325.8 698.5 325C702.9 324.3 708.2 324 713 324Z" fill="#1b1b1b"/><g clip-path="url(#coclip)" filter="url(#b06)"><path d="M672.0 399 L686.0 403 L698.0 404 L699.0 427 L668.0 427Z" fill="#8c8c8c"/><path d="M754.5 399 L740.5 403 L728.5 404 L727.5 427 L758.5 427Z" fill="#8c8c8c"/><path d="M666.6 382 L669.0 400 L673.0 427" stroke="#707070" stroke-width="1.5" fill="none"/><path d="M759.9 382 L757.5 400 L753.5 427" stroke="#707070" stroke-width="1.5" fill="none"/><path d="M668.6 382 L671.1 400 L675.4 427" stroke="#8a8a8a" stroke-width="1.0" fill="none"/><path d="M757.9 382 L755.4 400 L751.1 427" stroke="#8a8a8a" stroke-width="1.0" fill="none"/><path d="M670.6 382 L673.2 400 L677.8 427" stroke="#666" stroke-width="1.3" fill="none"/><path d="M755.9 382 L753.3 400 L748.7 427" stroke="#666" stroke-width="1.3" fill="none"/><path d="M686.0 407 L694.0 405 L697.5 413 L694.0 425 L686.5 422 L684.0 414Z" fill="#585858"/><path d="M740.5 407 L732.5 405 L729.0 413 L732.5 425 L740.0 422 L742.5 414Z" fill="#585858"/><path d="M674.0 404 L681.0 405 L683.0 416 L681.0 427 L676.0 427Z" fill="#696969"/><path d="M752.5 404 L745.5 405 L743.5 416 L745.5 427 L750.5 427Z" fill="#696969"/><path d="M683.6 404 L684.6 414 L683.4 426" stroke="#e9e9e9" stroke-width="1.2" fill="none"/><path d="M742.9 404 L741.9 414 L743.1 426" stroke="#e9e9e9" stroke-width="1.2" fill="none"/><path d="M690.0 403.4 L697.0 404.6" stroke="#d0d0d0" stroke-width="1.1" fill="none"/><path d="M736.5 403.4 L729.5 404.6" stroke="#d0d0d0" stroke-width="1.1" fill="none"/></g><path d="M713 326.6C717.7 326.6 722.8 326.9 727 327.6C731.2 328.3 734.7 329.4 738 331C741.3 332.6 744.5 334.7 747 337C749.5 339.3 751.4 342.2 753 345C754.6 347.8 755.7 350.8 756.5 354C757.3 357.2 757.8 360.7 758 364C758.2 367.3 757.9 370.8 757.5 374C757.1 377.2 756.4 380.2 755.5 383C754.6 385.8 753.4 388.7 752 391C750.6 393.3 748.8 395.4 747 397C745.2 398.6 743.2 399.8 741 400.5C738.8 401.2 736 401.4 734 401C732 400.6 730.3 399.5 729 398C727.7 396.5 727.2 393.4 726 392C724.8 390.6 724.2 389.8 722 389.3C719.8 388.8 716 388.8 713 388.8C710 388.8 706.2 388.8 704 389.3C701.8 389.8 701.2 390.6 700 392C698.8 393.4 698.3 396.5 697 398C695.7 399.5 694 400.6 692 401C690 401.4 687.2 401.2 685 400.5C682.8 399.8 680.8 398.6 679 397C677.2 395.4 675.4 393.3 674 391C672.6 388.7 671.4 385.8 670.5 383C669.6 380.2 668.9 377.2 668.5 374C668.1 370.8 667.8 367.3 668 364C668.2 360.7 668.7 357.2 669.5 354C670.3 350.8 671.4 347.8 673 345C674.6 342.2 676.5 339.3 679 337C681.5 334.7 684.7 332.6 688 331C691.3 329.4 694.8 328.3 699 327.6C703.2 326.9 708.3 326.6 713 326.6Z" fill="#5b5b5b"/><g filter="url(#b06)"><path d="M699.5 392C700.8 390.6 702.7 390 705 389.8C707.3 389.6 710.7 390.6 713.5 390.6C716.3 390.6 719.7 389.6 722 389.8C724.3 390 726.1 390.6 727.5 392C728.9 393.4 730.1 395.5 730.6 398C731.1 400.5 730.9 404.2 730.4 407C729.9 409.8 727.8 411.6 727.5 415C727.2 418.4 733 425.3 728.4 427.4C723.8 429.5 704.4 429.5 699.6 427.4C694.8 425.3 700.2 418.4 699.8 415C699.4 411.6 697.8 409.8 697.4 407C697 404.2 697 400.5 697.4 398C697.8 395.5 698.2 393.4 699.5 392Z" fill="#070707"/><path d="M707 404C707.8 403.2 709.7 404.8 710.4 406C711.1 407.2 711.3 409.5 711 411C710.7 412.5 709.5 415 708.6 415C707.7 415 705.9 412.8 705.6 411C705.3 409.2 706.2 404.8 707 404Z" fill="#7a7a7a"/><path d="M719.6 404C718.8 403.2 716.9 404.8 716.2 406C715.5 407.2 715.3 409.5 715.6 411C715.9 412.5 717.1 415 718 415C718.9 415 720.7 412.8 721 411C721.3 409.2 720.4 404.8 719.6 404Z" fill="#7a7a7a"/><path d="M713.4 397 L713.5 420" stroke="#5c5c5c" stroke-width="0.8"/><path d="M703 419C703.5 417.9 706.3 417.4 708 417.6C709.7 417.8 711.2 420 713 420C714.8 420 717.2 417.7 719 417.6C720.8 417.5 723.5 418.3 724 419.4C724.5 420.5 723.8 423 722 424C720.2 425 715.8 425.4 713 425.4C710.2 425.4 706.7 425.1 705 424C703.3 422.9 702.5 420.1 703 419Z" fill="#3e3e3e"/><path d="M706 398 L709.6 400.6 M721 398 L717.4 400.6" stroke="#a8a8a8" stroke-width="1"/></g><ellipse cx="703.8" cy="394.6" rx="1.5" ry="2.6" fill="#f2f2f2"/><ellipse cx="723.6" cy="394.6" rx="1.5" ry="2.6" fill="#f2f2f2"/></g><path d="M713 336.6C717.1 336.6 721.8 336.9 725.3 337.4C728.7 338 731.3 338.9 733.7 340.1C736.2 341.2 738.4 342.7 740.2 344.3C741.9 345.9 743.2 347.8 744.3 349.9C745.4 351.9 746.2 354.1 746.8 356.5C747.5 359 747.9 361.8 748 364.5C748.1 367.2 747.9 370.1 747.6 372.7C747.2 375.3 746.7 377.7 746 379.9C745.3 382.1 744.4 384.2 743.5 385.8C742.5 387.4 749.7 388.6 740.5 389.4C731.2 390.3 697.1 390.9 687.9 390.9C678.8 390.9 686.4 390.3 685.5 389.4C684.6 388.6 683.5 387.4 682.5 385.8C681.6 384.2 680.7 382.1 680 379.9C679.3 377.7 678.8 375.3 678.4 372.7C678.1 370.1 677.9 367.2 678 364.5C678.1 361.8 678.5 359 679.2 356.5C679.8 354.1 680.6 351.9 681.7 349.9C682.8 347.8 684.1 345.9 685.8 344.3C687.6 342.7 689.8 341.2 692.3 340.1C694.7 338.9 697.3 338 700.7 337.4C704.2 336.9 708.9 336.6 713 336.6Z" fill="#686868" filter="url(#b2)" opacity="0.8"/><path d="M713 326.6C717.7 326.6 722.8 326.9 727 327.6C731.2 328.3 734.7 329.4 738 331C741.3 332.6 744.5 334.7 747 337C749.5 339.3 751.4 342.2 753 345C754.6 347.8 755.7 350.8 756.5 354C757.3 357.2 757.8 360.7 758 364C758.2 367.3 757.9 370.8 757.5 374C757.1 377.2 756.4 380.2 755.5 383C754.6 385.8 753.4 388.7 752 391C750.6 393.3 748.8 395.4 747 397C745.2 398.6 743.2 399.8 741 400.5C738.8 401.2 736 401.4 734 401C732 400.6 730.3 399.5 729 398C727.7 396.5 727.2 393.4 726 392C724.8 390.6 724.2 389.8 722 389.3C719.8 388.8 716 388.8 713 388.8C710 388.8 706.2 388.8 704 389.3C701.8 389.8 701.2 390.6 700 392C698.8 393.4 698.3 396.5 697 398C695.7 399.5 694 400.6 692 401C690 401.4 687.2 401.2 685 400.5C682.8 399.8 680.8 398.6 679 397C677.2 395.4 675.4 393.3 674 391C672.6 388.7 671.4 385.8 670.5 383C669.6 380.2 668.9 377.2 668.5 374C668.1 370.8 667.8 367.3 668 364C668.2 360.7 668.7 357.2 669.5 354C670.3 350.8 671.4 347.8 673 345C674.6 342.2 676.5 339.3 679 337C681.5 334.7 684.7 332.6 688 331C691.3 329.4 694.8 328.3 699 327.6C703.2 326.9 708.3 326.6 713 326.6Z" fill="#303030" filter="url(#sulci)" opacity="0.4"/><path d="M685.7 399.8C685.8 399.4 686 398 686.4 397.4C686.8 396.7 687.4 396.2 688.2 395.9C689 395.6 690.7 395.5 691.2 395.4M688.2 395.9L687.4 392.4M678.3 396.9C678.5 396.2 678.9 394.2 679.2 392.9C679.5 391.6 679.6 390.1 680.3 389C681 387.9 682.7 386.6 683.2 386.1M680.3 389L684.5 389M674 389C674.4 388.7 675.8 387.7 676.7 387.4C677.7 387 678.6 386.9 679.6 386.9C680.6 386.9 682 387.1 682.5 387.1M679.6 386.9L680.9 384.3M670.7 381.2C671.3 381.2 673.2 381.5 674.2 381.1C675.1 380.6 675.5 379.1 676.3 378.5C677.2 377.9 678.8 377.6 679.3 377.4M668.8 375.1C669.5 374.9 671.9 375 672.9 374C673.9 373.1 673.6 370.1 674.8 369.3C675.9 368.6 678.8 369.5 679.6 369.5M668.1 365.7C668.5 365.3 669.7 363.8 670.7 363.5C671.7 363.2 673.1 363.9 674.1 363.8C675.2 363.6 676.6 362.9 677.1 362.7M674.1 363.8L675.9 359.3M668.7 359.6C669 359.5 670 359 670.7 359C671.4 359 672.2 359.8 672.9 359.8C673.6 359.8 674.6 359.1 674.9 359M670.2 349.8C670.9 350.2 673 352.1 674.3 351.7C675.6 351.4 676.8 348.6 678.1 347.9C679.4 347.2 681.4 347.5 682.1 347.5M673.7 343C674.2 343.3 676 344.1 676.6 345.1C677.2 346 676.6 347.7 677 348.7C677.5 349.8 678.9 350.8 679.3 351.2M677 348.7L679.7 349.2M678 338.3C678.3 338.8 679.3 340.4 680.2 340.9C681.1 341.4 682.6 341.1 683.5 341.5C684.5 342 685.6 343.4 686 343.8M684.2 333.6C684.4 334 685.1 334.9 685.5 335.6C685.9 336.2 686.1 337.1 686.6 337.6C687.2 338.2 688.5 338.6 688.9 338.8M691.1 329.3C691.3 329.7 692.5 331 692.3 331.9C692 332.7 689.9 333.4 689.6 334.2C689.2 335.1 690 336.3 690.1 336.8M700.4 327.6C700.8 328.2 702.8 330.1 702.9 331.6C703 333 701.1 334.7 701 336.1C700.8 337.6 701.8 339.6 702 340.3M707.1 327C707.4 327.6 708.7 329.1 708.9 330.2C709.1 331.3 708.4 332.5 708.1 333.7C707.9 334.8 707.5 336.5 707.4 337.1M716.1 326.8C716.3 327.2 717.3 328.5 717.5 329.4C717.7 330.4 717 331.4 717.2 332.4C717.4 333.3 718.5 334.5 718.8 335M724.7 327.4C724.8 327.8 724.8 328.8 725 329.5C725.2 330.1 726.1 330.8 725.9 331.5C725.7 332.2 724.3 333.3 724 333.6M731.9 329.3C731.9 329.7 731.8 330.9 731.7 331.8C731.5 332.6 731 333.4 730.9 334.2C730.8 335 731 336.2 731.1 336.7M730.9 334.2L726.9 335.7M740.4 332.7C740.2 333.1 739.8 334.3 739.3 335C738.7 335.6 737.4 336 737.2 336.8C736.9 337.6 737.7 339.3 737.8 339.8M746.9 336.3C746.3 336.5 744.3 336.6 743.4 337.3C742.5 338 742.5 340.2 741.5 340.8C740.5 341.3 738.1 340.8 737.4 340.8M741.5 340.8L737.7 339.5M751.8 341.7C751.3 341.9 749.5 342 748.7 342.7C748 343.4 748.1 344.9 747.5 345.6C746.8 346.4 745.4 347 745 347.2M747.5 345.6L744.6 344.8M755.1 349.5C754.8 349.7 754 350.5 753.4 350.8C752.7 351.2 751.8 351.2 751.1 351.5C750.4 351.8 749.5 352.5 749.2 352.6M757 358.1C756.3 358.1 753.7 357.4 752.4 358.1C751.2 358.7 750.7 361.7 749.3 362.1C747.9 362.4 745 360.6 744.1 360.3M758 364.2C757.6 364.2 756.3 364.1 755.4 364.2C754.5 364.3 753.6 365 752.8 364.7C751.9 364.5 750.7 363.2 750.3 362.9M757.6 373C757.3 373.3 756.4 374.3 755.8 374.7C755.1 375 754.3 375.1 753.5 375.1C752.8 375.1 751.5 374.9 751.1 374.8M753.5 375.1L753 377.9M755.9 381.4C755.6 381.2 754.6 380.4 753.9 380.1C753.2 379.8 752.5 379.7 751.8 379.6C751 379.4 750 379.2 749.6 379.1M751.8 379.6L750.7 375.6M753.4 387C753 386.5 751.9 384.6 750.8 383.7C749.7 382.9 747.8 383 746.8 381.9C745.9 380.9 745.5 378.3 745.2 377.5M748.3 395.1C747.9 394.9 746.6 394.5 745.7 394.1C744.9 393.8 744 393.4 743.3 392.9C742.5 392.4 741.5 391.3 741.2 391M743.3 392.9L742.9 390M741.5 399.1C741 398.7 739.8 397.3 738.6 396.8C737.4 396.2 735.3 397 734.5 396C733.7 395 733.8 391.8 733.7 391M734.5 396L731.9 396.3" fill="none" stroke="#2b2b2b" stroke-width="1.25" stroke-linecap="round" filter="url(#b03)" style="opacity:var(--so,0.9)"/><path d="M713 326.6C717.7 326.6 722.8 326.9 727 327.6C731.2 328.3 734.7 329.4 738 331C741.3 332.6 744.5 334.7 747 337C749.5 339.3 751.4 342.2 753 345C754.6 347.8 755.7 350.8 756.5 354C757.3 357.2 757.8 360.7 758 364C758.2 367.3 757.9 370.8 757.5 374C757.1 377.2 756.4 380.2 755.5 383C754.6 385.8 753.4 388.7 752 391C750.6 393.3 748.8 395.4 747 397C745.2 398.6 743.2 399.8 741 400.5C738.8 401.2 736 401.4 734 401C732 400.6 730.3 399.5 729 398C727.7 396.5 727.2 393.4 726 392C724.8 390.6 724.2 389.8 722 389.3C719.8 388.8 716 388.8 713 388.8C710 388.8 706.2 388.8 704 389.3C701.8 389.8 701.2 390.6 700 392C698.8 393.4 698.3 396.5 697 398C695.7 399.5 694 400.6 692 401C690 401.4 687.2 401.2 685 400.5C682.8 399.8 680.8 398.6 679 397C677.2 395.4 675.4 393.3 674 391C672.6 388.7 671.4 385.8 670.5 383C669.6 380.2 668.9 377.2 668.5 374C668.1 370.8 667.8 367.3 668 364C668.2 360.7 668.7 357.2 669.5 354C670.3 350.8 671.4 347.8 673 345C674.6 342.2 676.5 339.3 679 337C681.5 334.7 684.7 332.6 688 331C691.3 329.4 694.8 328.3 699 327.6C703.2 326.9 708.3 326.6 713 326.6Z" fill="#fff" filter="url(#grain)" opacity="0.10"/><g filter="url(#b03)"><path d="M710.5 366 L709.6 374.5 M717.6 366 L718.4 374.5" stroke="#2b2b2b" stroke-width="1.5"/><path d="M713.6 360 L713.7 388" stroke="#3a3a3a" stroke-width="0.9"/><path d="M709.8 326.4 L716.2 326.4 L713.2 330.3Z" fill="#f2f2f2"/><path d="M713.1 329 L713.6 335" stroke="#e6e6e6" stroke-width="0.9"/><circle cx="696" cy="330.5" r="0.55" fill="#dcdcdc"/><circle cx="722" cy="329" r="0.55" fill="#dcdcdc"/><circle cx="731.5" cy="333.5" r="0.55" fill="#dcdcdc"/><circle cx="739.5" cy="337.5" r="0.55" fill="#dcdcdc"/><circle cx="675" cy="349" r="0.55" fill="#dcdcdc"/><circle cx="672" cy="362" r="0.55" fill="#dcdcdc"/><circle cx="675.5" cy="368.5" r="0.55" fill="#dcdcdc"/><circle cx="751.5" cy="356.5" r="0.55" fill="#dcdcdc"/><circle cx="680" cy="385.8" r="0.55" fill="#dcdcdc"/><circle cx="689" cy="390" r="0.55" fill="#dcdcdc"/><circle cx="745" cy="386" r="0.55" fill="#dcdcdc"/><circle cx="738" cy="391.5" r="0.55" fill="#dcdcdc"/></g><path d="M715.5 334.8C717 334.8 719.4 335.2 721 336C722.6 336.8 724.2 338.3 725.3 339.8C726.4 341.3 727.1 343.1 727.4 345C727.7 346.9 727.8 349.2 727.3 351C726.8 352.8 725.7 354.6 724.5 356C723.3 357.4 721.7 358.6 720 359.2C718.3 359.8 716.2 359.8 714.5 359.3C712.8 358.9 711.2 357.6 710 356.5C708.8 355.4 708.2 353.5 707.3 352.5C706.3 351.5 705 351.3 704.3 350.3C703.6 349.3 703.1 347.7 703.2 346.5C703.3 345.3 704.2 344.1 705 343.3C705.8 342.5 707 342.7 707.8 341.8C708.5 340.9 708.8 339 709.5 338C710.2 337 711 336.1 712 335.6C713 335.1 714 334.7 715.5 334.8Z" style="fill:var(--tf,#c9c9c9)"/><g style="opacity:var(--to,1)"><path d="M715.5 334.8C717 334.8 719.4 335.2 721 336C722.6 336.8 724.2 338.3 725.3 339.8C726.4 341.3 727.1 343.1 727.4 345C727.7 346.9 727.8 349.2 727.3 351C726.8 352.8 725.7 354.6 724.5 356C723.3 357.4 721.7 358.6 720 359.2C718.3 359.8 716.2 359.8 714.5 359.3C712.8 358.9 711.2 357.6 710 356.5C708.8 355.4 708.2 353.5 707.3 352.5C706.3 351.5 705 351.3 704.3 350.3C703.6 349.3 703.1 347.7 703.2 346.5C703.3 345.3 704.2 344.1 705 343.3C705.8 342.5 707 342.7 707.8 341.8C708.5 340.9 708.8 339 709.5 338C710.2 337 711 336.1 712 335.6C713 335.1 714 334.7 715.5 334.8Z" fill="#ededed" filter="url(#blot)" opacity="0.6"/></g><g style="opacity:var(--tg,0)"><path d="M715.5 334.8C717 334.8 719.4 335.2 721 336C722.6 336.8 724.2 338.3 725.3 339.8C726.4 341.3 727.1 343.1 727.4 345C727.7 346.9 727.8 349.2 727.3 351C726.8 352.8 725.7 354.6 724.5 356C723.3 357.4 721.7 358.6 720 359.2C718.3 359.8 716.2 359.8 714.5 359.3C712.8 358.9 711.2 357.6 710 356.5C708.8 355.4 708.2 353.5 707.3 352.5C706.3 351.5 705 351.3 704.3 350.3C703.6 349.3 703.1 347.7 703.2 346.5C703.3 345.3 704.2 344.1 705 343.3C705.8 342.5 707 342.7 707.8 341.8C708.5 340.9 708.8 339 709.5 338C710.2 337 711 336.1 712 335.6C713 335.1 714 334.7 715.5 334.8Z" fill="#5a8f5c" filter="url(#blot)" opacity="0.55"/></g><path d="M715.5 334.8C717 334.8 719.4 335.2 721 336C722.6 336.8 724.2 338.3 725.3 339.8C726.4 341.3 727.1 343.1 727.4 345C727.7 346.9 727.8 349.2 727.3 351C726.8 352.8 725.7 354.6 724.5 356C723.3 357.4 721.7 358.6 720 359.2C718.3 359.8 716.2 359.8 714.5 359.3C712.8 358.9 711.2 357.6 710 356.5C708.8 355.4 708.2 353.5 707.3 352.5C706.3 351.5 705 351.3 704.3 350.3C703.6 349.3 703.1 347.7 703.2 346.5C703.3 345.3 704.2 344.1 705 343.3C705.8 342.5 707 342.7 707.8 341.8C708.5 340.9 708.8 339 709.5 338C710.2 337 711 336.1 712 335.6C713 335.1 714 334.7 715.5 334.8Z" fill="none" style="stroke:var(--ts,#c3d24e);stroke-width:var(--tw,0.6px)"/><rect x="679" y="324.2" width="72.0" height="65.1" fill="none" style="stroke:var(--rc,#b39b58);stroke-width:var(--rw,0.55px)"/></g></defs></svg>
<svg style="left:292px;top:292px;will-change:transform" width="170" height="9" viewBox="-0.10 -0.6 170 9"><rect width="168.3" height="7.6" y="0.3" fill="#f4402c"/><path d="M2.6 3.9 h2.6" stroke="#222" stroke-width="0.9"/><rect x="7.2" y="0.7" width="5.6" height="6.4" fill="#f88d80"/><text x="8.2" y="5.8" font-size="5" fill="#1a1a1a" stroke="#1a1a1a" stroke-width="0.2" font-family="DejaVu Sans,Liberation Sans,sans-serif">R</text><circle cx="17" cy="4" r="1.5" fill="#3b3b3b"/><circle cx="16.5" cy="3.5" r="0.5" fill="#eee"/><rect x="24.5" y="2.8" width="108" height="2.4" rx="1.1" fill="#f5f5f5" stroke="#8f8f8f" stroke-width="0.4"/><rect x="24.7" y="3" width="65.8" height="2" rx="1" fill="#5a96d2"/><rect x="89.0" y="1.1" width="3" height="5.8" rx="0.8" fill="#f4f4f4" stroke="#8a8a8a" stroke-width="0.4"/><rect x="134" y="0.3" width="34.3" height="7" fill="#f88d80"/><text x="134.9" y="5.7" font-size="4.45" fill="#111" stroke="#111" stroke-width="0.22" font-family="DejaVu Sans,Liberation Sans,sans-serif">S: 18.900mm</text></svg>
<svg style="left:460px;top:292px;will-change:transform" width="170" height="9" viewBox="-0.40 -0.6 170 9"><rect width="167.6" height="7.6" y="0.3" fill="#edd84b"/><path d="M2.6 3.9 h2.6" stroke="#222" stroke-width="0.9"/><rect x="7.2" y="0.7" width="5.6" height="6.4" fill="#f6ea98"/><text x="8.2" y="5.8" font-size="5" fill="#1a1a1a" stroke="#1a1a1a" stroke-width="0.2" font-family="DejaVu Sans,Liberation Sans,sans-serif">Y</text><circle cx="17" cy="4" r="1.5" fill="#3b3b3b"/><circle cx="16.5" cy="3.5" r="0.5" fill="#eee"/><rect x="24.5" y="2.8" width="108" height="2.4" rx="1.1" fill="#f5f5f5" stroke="#8f8f8f" stroke-width="0.4"/><rect x="24.7" y="3" width="59.3" height="2" rx="1" fill="#5a96d2"/><rect x="82.5" y="1.1" width="3" height="5.8" rx="0.8" fill="#f4f4f4" stroke="#8a8a8a" stroke-width="0.4"/><rect x="134" y="0.3" width="33.6" height="7" fill="#f6ea98"/><text x="134.9" y="5.7" font-size="4.45" fill="#111" stroke="#111" stroke-width="0.22" font-family="DejaVu Sans,Liberation Sans,sans-serif">R: -4.219mm</text></svg>
<svg style="left:628px;top:292px;will-change:transform" width="171" height="9" viewBox="0.00 -0.6 171 9"><rect width="169.2" height="7.6" y="0.3" fill="#70c234"/><path d="M2.6 3.9 h2.6" stroke="#222" stroke-width="0.9"/><rect x="7.2" y="0.7" width="5.6" height="6.4" fill="#acdc86"/><text x="8.2" y="5.8" font-size="5" fill="#1a1a1a" stroke="#1a1a1a" stroke-width="0.2" font-family="DejaVu Sans,Liberation Sans,sans-serif">G</text><circle cx="17" cy="4" r="1.5" fill="#3b3b3b"/><circle cx="16.5" cy="3.5" r="0.5" fill="#eee"/><rect x="24.5" y="2.8" width="108" height="2.4" rx="1.1" fill="#f5f5f5" stroke="#8f8f8f" stroke-width="0.4"/><rect x="24.7" y="3" width="66.8" height="2" rx="1" fill="#5a96d2"/><rect x="90.0" y="1.1" width="3" height="5.8" rx="0.8" fill="#f4f4f4" stroke="#8a8a8a" stroke-width="0.4"/><rect x="134" y="0.3" width="35.2" height="7" fill="#acdc86"/><text x="134.9" y="5.7" font-size="4.45" fill="#111" stroke="#111" stroke-width="0.22" font-family="DejaVu Sans,Liberation Sans,sans-serif">A: 24.843mm</text></svg>
<svg style="left:292.6px;top:299.9px" width="167.7" height="137.7" viewBox="292.6 299.9 167.7 137.7"><rect x="292.6" y="300" width="167.7" height="138" fill="#000"/><use href="#axial"/></svg>
<svg style="left:460.9px;top:299.9px" width="166.7" height="137.7" viewBox="460.9 299.9 166.7 137.7"><rect x="460.9" y="300" width="166.7" height="138" fill="#000"/><use href="#sag"/></svg>
<svg style="left:628.2px;top:299.9px" width="169.0" height="137.7" viewBox="628.2 299.9 169.0 137.7"><rect x="628.2" y="300" width="169.0" height="138" fill="#000"/><use href="#cor"/></svg>
<div class="a" style="left:292px;top:299.9px;width:0.6px;height:137.7px;background:#000;"></div>
<div class="a" style="left:460.3px;top:299.9px;width:0.6px;height:137.7px;background:#3a3a46;"></div>
<div class="a" style="left:627.6px;top:299.9px;width:0.6px;height:137.7px;background:#3a3a46;"></div>
<div class="a" style="left:0px;top:437.6px;width:797px;height:13.4px;background:#fff;"></div>
<span class="t" style="left:3px;top:442.60px;">Fast GrowCut done: press 'S' to refine seed image, or 'R' to reset fast GrowCut parameters</span>
<svg style="left:783px;top:439px" width="14" height="12" viewBox="0 0 14 12"><rect x="0.5" y="0.8" width="12" height="12" rx="1" fill="#f4f4f4" stroke="#d0d0d0" stroke-width="0.5"/><circle cx="7" cy="6.8" r="4.6" fill="#e8141c"/><path d="M5.2 5 L8.8 8.6 M8.8 5 L5.2 8.6" stroke="#fff" stroke-width="1.3" stroke-linecap="round"/></svg>
<div class="a" style="left:797.2px;top:0px;width:2.8px;height:451px;background:linear-gradient(90deg,#7d87ab,#2c3f78 45%,#26376c);"></div>
</div></body></html>
